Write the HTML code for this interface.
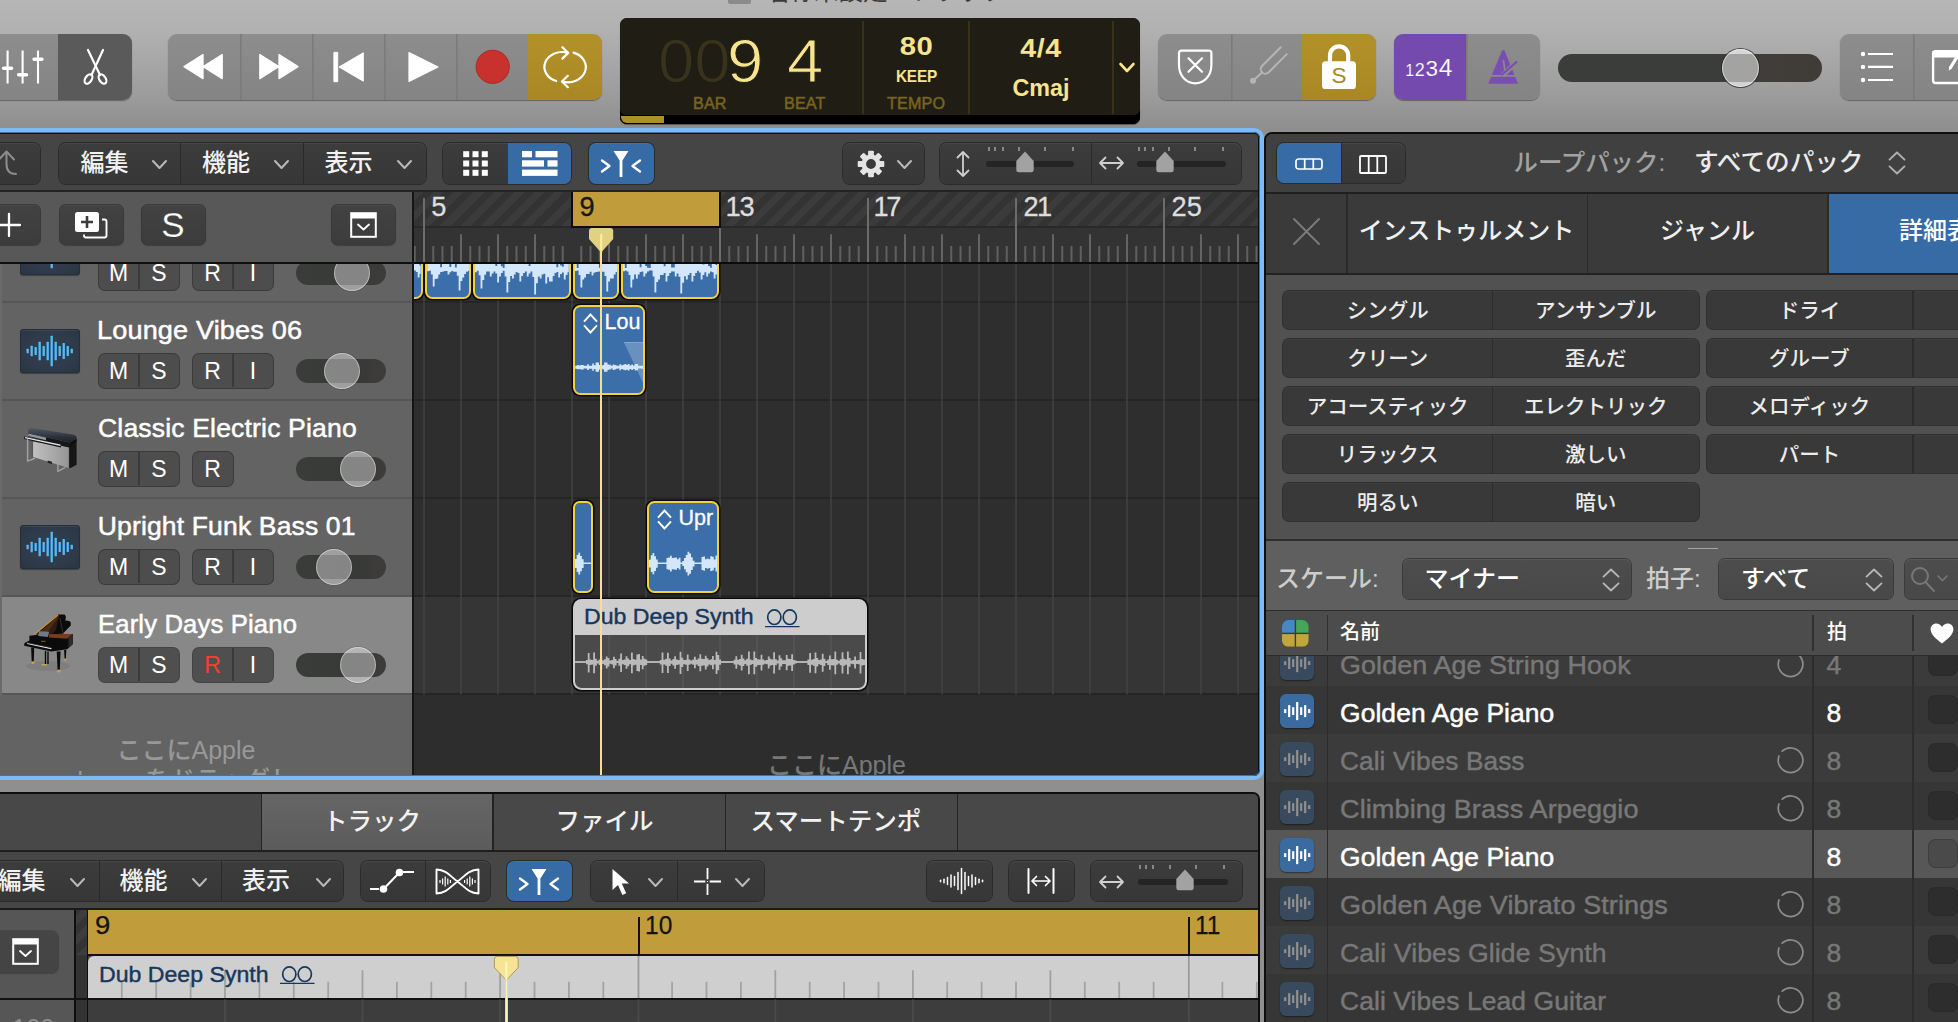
<!DOCTYPE html><html lang="ja"><head><meta charset="utf-8"><title>Logic Pro</title><style>

*{box-sizing:border-box;margin:0;padding:0}
html,body{width:1958px;height:1022px;overflow:hidden;background:#8f8f8f}
body{font-family:"Liberation Sans","Noto Sans CJK JP",sans-serif;color:#fff;position:relative}
.abs{position:absolute}
#top{position:absolute;left:0;top:0;width:1958px;height:130px;background:linear-gradient(#b6b6b6 0px,#b1b1b1 30px,#a6a6a6 65px,#9a9a9a 100px,#8e8e8e 130px)}
.tg{position:absolute;top:34px;height:66px;border-radius:9px;overflow:hidden;box-shadow:0 1px 1px rgba(0,0,0,.35);background:linear-gradient(#8d8d8d,#848484)}
.tb{position:absolute;top:0;height:66px;box-shadow:inset 1.6px 0 0 #7b7b7b}
.tb:first-child{box-shadow:none}
.tb svg{position:absolute;left:0;top:0}
#lcd{position:absolute;left:620px;top:18px;width:520px;height:105.6px;border-radius:7px;background:#000;overflow:hidden;box-shadow:0 1px 1px rgba(0,0,0,.4)}
#lcd .pn{position:absolute;left:0;top:0;width:520px;height:96.8px;border-radius:7px 7px 6px 6px;background:#1f1d14}
#lcd .dv{position:absolute;top:2.5px;width:1.8px;height:93px;background:#3a3218}
#lcd .lab{position:absolute;font-size:16.1px;color:#78631f;letter-spacing:.2px;top:76.5px;line-height:1;height:17px;-webkit-text-stroke:.55px #78631f}
#lcd .big{position:absolute;font-size:61px;line-height:1;top:13px;color:#f8e38e;-webkit-text-stroke:1.05px #1f1d14;transform:scaleX(1.07);transform-origin:0 0}
#lcd .b2{position:absolute;font-weight:bold;color:#f8e38e;line-height:1;text-align:center}
.pb{position:absolute;left:0;top:97.8px;width:520px;height:8px;background:#000}
.pb i{position:absolute;left:1px;top:0;width:43.2px;height:7.2px;background:#b08f28;border-radius:0 0 0 6px}

/* dark UI buttons */
.dg{position:absolute;border-radius:7px;background:linear-gradient(#3c3c3c,#373737);box-shadow:0 0 0 1px #2b2b2b,inset 0 1px 0 rgba(255,255,255,.06);overflow:hidden}
.dg .d{position:absolute;top:0;bottom:0;width:1px;background:#2a2a2a}
.dg .bl{position:absolute;top:0;bottom:0;background:#366ba5}
.jt{position:absolute;font-size:24px;line-height:1;color:#f2f2f2;white-space:nowrap;font-weight:500}
svg{display:block;overflow:visible}


#arr{position:absolute;left:-10px;top:128px;width:1274px;height:652px;border:4px solid #7cbaf8;border-radius:10px;background:#0c0c0c;overflow:hidden}
#arr>.in{position:absolute;left:6px;top:-132px;width:0;height:0}
.chev{position:absolute}
.hb{position:absolute;top:204.3px;height:41.2px;border-radius:7px;background:linear-gradient(#424242,#3c3c3c);box-shadow:inset 0 0 0 1px #3a3a3a,inset 0 2px 0 rgba(255,255,255,.05),0 1px 1px rgba(0,0,0,.3)}
.trk{position:absolute;left:0;width:412px;height:96px;background:#636363}
.trk.sel{background:#888}
.trk .nm{position:absolute;left:98px;top:11.3px;font-size:26.5px;line-height:32px;white-space:nowrap;color:#fff;letter-spacing:.15px;-webkit-text-stroke:.5px #fff;transform-origin:0 0}
.bt2{position:absolute;top:51px;height:33.6px;border-radius:6px;background:#4d4d4d;box-shadow:0 0 0 1px #3b3b3b;overflow:hidden}
.trk.sel .bt2{background:#4f4f4f;box-shadow:0 0 0 1px #444}
.bt2 b{position:absolute;top:0;height:33px;font-weight:normal;font-size:23px;line-height:34px;text-align:center;color:#fff}
.bt2 i{position:absolute;top:0;width:1.5px;height:33px;background:#3a3a3a}
.vs{position:absolute;left:296px;top:56px;width:90px;height:24px;border-radius:12px;background:linear-gradient(90deg,#3a3c3a,#383a38 70%,#3e3c3a)}
.vk{position:absolute;top:50px;width:36px;height:36px;border-radius:50%;background:rgba(255,255,255,.385);border:1.3px solid rgba(255,255,255,.42);box-shadow:0 0 0 .6px rgba(40,40,40,.35)}
.tic{position:absolute;left:20.4px;top:26px;width:59.5px;height:44px;border-radius:3.5px;background:radial-gradient(ellipse at center,#323f50 0%,#2f3b4b 60%,#2a3441 100%);box-shadow:inset 0 0 0 1px #252e3a,inset 0 2px 0 rgba(255,255,255,.07),0 1px 1px rgba(0,0,0,.35)}
.rg{position:absolute;border:2px solid #f6d038;border-radius:7.5px;background:#3c6ea9;box-shadow:0 0 0 1.6px #0a0a0a;overflow:hidden}
.rg .t{position:absolute;font-size:21.5px;line-height:1;color:#fff;white-space:nowrap;-webkit-text-stroke:.3px #fff}


#ed{position:absolute;left:-10px;top:792px;width:1270px;height:240px;border:2px solid #0e0e0e;border-radius:7px;background:#464646;overflow:hidden}
#ed>.in{position:absolute;left:8px;top:-794px;width:0;height:0}
.tab{position:absolute;top:795px;height:56.5px;font-size:24.5px;line-height:54px;text-align:center;color:#f2f2f2;white-space:nowrap;font-weight:500}


#lb{position:absolute;left:1264px;top:132px;width:720px;height:920px;border:2px solid #0e0e0e;border-radius:8px;background:#3a3a3a;overflow:hidden}
#lb>.in{position:absolute;left:-1266px;top:-134px;width:0;height:0}
.tag{position:absolute;height:38.4px;border-radius:6px;background:#393939;box-shadow:0 0 0 1px #303030,inset 0 1px 0 rgba(255,255,255,.04);overflow:hidden}
.tag b{position:absolute;top:0;height:38.4px;font-weight:500;font-size:20.5px;line-height:39.2px;text-align:center;color:#ececec;white-space:nowrap}
.tag i{position:absolute;top:0;width:1.3px;height:38.4px;background:#2c2c2c}
.sel2{position:absolute;top:559px;height:40px;border-radius:6px;background:linear-gradient(#4d4d4d,#484848);box-shadow:0 0 0 1px #3b3b3b,inset 0 1px 0 rgba(255,255,255,.07)}
.lt{position:absolute;font-weight:500;font-size:24px;line-height:28px;white-space:nowrap}
.row{position:absolute;left:1266px;width:700px;height:48px}
.row .n{position:absolute;left:74.3px;top:11px;font-size:26.5px;line-height:32px;white-space:nowrap;letter-spacing:.1px;transform-origin:0 0}
.row .bt{position:absolute;left:560.5px;top:11px;font-size:26.5px;line-height:32px}
.row .ic{position:absolute;left:13.9px;top:7.8px;width:34.2px;height:34.2px;border-radius:6px}
.row .cb{position:absolute;left:663px;top:10px;width:28px;height:26.5px;border-radius:6.5px;background:#2d2d2d;box-shadow:0 0 0 1px #2a2a2a}

</style></head><body>
<div id="top">
<div class="abs" style="left:728px;top:-9px;width:23px;height:13px;background:#8b8b8b;border-radius:2px"></div>
<div class="abs" style="left:765px;top:-20.3px;font-size:24.5px;line-height:1;color:#3c3c3c;white-space:nowrap;height:27px;overflow:hidden">名称未設定 - トラック</div>
<div class="tg" style="left:-10px;width:142px">
<div class="tb" style="left:0;width:68px"><svg width="68" height="67" viewBox="0 0 68 67"><g stroke="#fff" stroke-width="2.1" stroke-linecap="butt"><path d="M17.6 16.6V49.6M32.6 16.6V49.6M48 16.6V49.6"/></g><g stroke="#fff" stroke-width="3.4" stroke-linecap="round"><path d="M13.6 34.3H21.6M28.6 40.7H36.6M44 25.3H52"/></g></svg></div>
<div class="tb" style="left:68px;width:74px;background:#5a5a5a;box-shadow:none"><svg width="74" height="67" viewBox="0 0 74 67"><g fill="none" stroke="#fff" stroke-width="2.2" stroke-linecap="round" stroke-linejoin="round"><path d="M30 16L42 41"/><path d="M45 16L33.5 41"/><ellipse cx="30.5" cy="45" rx="3.2" ry="5.2" transform="rotate(32 30.5 45)"/><ellipse cx="44.5" cy="45" rx="3.2" ry="5.2" transform="rotate(-32 44.5 45)"/></g></svg></div>
</div>
<div class="tg" style="left:168px;width:434px">
<div class="tb" style="left:0px;width:72px;"><svg width="72" height="67" viewBox="0 0 72 67"><path fill="#fff" d="M16 32.6L35 20.6V44.6ZM35.2 32.6L54.2 20.6V44.6Z" stroke="#fff" stroke-width="1.3" stroke-linejoin="round"/></svg></div>
<div class="tb" style="left:72px;width:72px;"><svg width="72" height="67" viewBox="0 0 72 67"><path fill="#fff" d="M58 32.6L39 20.6V44.6ZM38.8 32.6L19.8 20.6V44.6Z" stroke="#fff" stroke-width="1.3" stroke-linejoin="round"/></svg></div>
<div class="tb" style="left:144px;width:72px;"><svg width="72" height="67" viewBox="0 0 72 67"><path fill="#fff" d="M21.9 18.3H25.7V47.7H21.9ZM27 33L51.3 18.8V47.2Z" stroke="#fff" stroke-width="1" stroke-linejoin="round"/></svg></div>
<div class="tb" style="left:216px;width:72px;"><svg width="72" height="67" viewBox="0 0 72 67"><path fill="#fff" d="M25 18.5L54 33L25 47.5Z" stroke="#fff" stroke-width="1.2" stroke-linejoin="round"/></svg></div>
<div class="tb" style="left:288px;width:72px;"><svg width="72" height="67" viewBox="0 0 72 67"><circle cx="36.7" cy="32.8" r="16.6" fill="#c9312e" stroke="#b02825" stroke-width="1"/></svg></div>
<div class="tb" style="left:360px;width:74px;background:linear-gradient(#b3912a,#a98824);box-shadow:none;"><svg width="74" height="67" viewBox="0 0 74 67"><g fill="none" stroke="#fff" stroke-width="2.2" stroke-linecap="round" stroke-linejoin="round"><path d="M28.2 47A17.3 14.6 0 0 1 40 18.9"/><path d="M45.5 18.6A17.3 14.6 0 0 1 34.1 47.5"/><path d="M34.4 13.2L40.2 18.9L34.4 24.6"/><path d="M39.8 41.8L34 47.5L39.8 53.2"/></g></svg></div>
</div>
<div id="lcd"><div class="pn"></div>
<div class="dv" style="left:242px"></div><div class="dv" style="left:348px"></div><div class="dv" style="left:492px"></div>
<div class="big" style="left:38px;color:#39321c">00</div>
<div class="big" style="left:107px">9</div>
<div class="big" style="left:167px">4</div>
<div class="lab" style="left:73px">BAR</div><div class="lab" style="left:164px">BEAT</div><div class="lab" style="left:267px">TEMPO</div>
<div class="b2" style="left:245px;width:103px;top:16px;font-size:25px;letter-spacing:.5px;transform:scaleX(1.17)">80</div>
<div class="b2" style="left:245px;width:103px;top:50px;font-size:16.5px;letter-spacing:-.2px;transform:scaleX(.93)">KEEP</div>
<div class="b2" style="left:350px;width:142px;top:17.5px;font-size:25px;letter-spacing:.5px;transform:scaleX(1.14)">4/4</div>
<div class="b2" style="left:350px;width:142px;top:57.5px;font-size:24.3px;transform:scaleX(.96)">Cmaj</div>
<svg class="abs" style="left:499px;top:44px" width="16" height="12"><path d="M1.5 2L8 9L14.5 2" fill="none" stroke="#f8e38e" stroke-width="2.6" stroke-linecap="round" stroke-linejoin="round"/></svg>
<div class="pb"><i></i></div>
</div>
<div class="tg" style="left:1158px;width:218px">
<div class="tb" style="left:0;width:73px"><svg width="73" height="67" viewBox="0 0 73 67"><g fill="none" stroke="#fff" stroke-width="2.2" stroke-linecap="round" stroke-linejoin="round"><path d="M23.5 16.6H51Q53.4 16.6 53.4 19V31C53.4 42 46 49.3 37.2 49.3C28.4 49.3 21 42 21 31V19Q21 16.6 23.5 16.6Z"/><path d="M30.5 24.3L44 37.8M44 24.3L30.5 37.8"/></g></svg></div>
<div class="tb" style="left:73px;width:71px"><svg width="71" height="67" viewBox="0 0 71 67"><g fill="none" stroke="#b4b4b4" stroke-width="2" stroke-linecap="round"><path d="M49.7 13.3L31 32A4.6 4.6 0 0 0 37.5 38.5L55.8 20.1"/><path d="M31 38.5L22 46.8"/></g><circle cx="22" cy="46.8" r="3" fill="#b4b4b4"/></svg></div>
<div class="tb" style="left:144px;width:74px;background:linear-gradient(#b3912a,#a98824);box-shadow:none"><svg width="74" height="67" viewBox="0 0 74 67"><path d="M28 29V21.4A9.1 9.1 0 0 1 46.2 21.4V29" fill="none" stroke="#fff" stroke-width="4.2"/><rect x="20" y="27.2" width="34" height="27.8" rx="3.6" fill="#fff"/><text x="37.1" y="48.6" font-family="Liberation Sans,sans-serif" font-size="22.5" fill="#a98723" text-anchor="middle">S</text></svg></div>
</div>
<div class="tg" style="left:1394px;width:146px">
<div class="tb" style="left:0;width:72px;background:#754aae"><div class="abs" style="left:11.3px;top:18.6px;white-space:nowrap;line-height:30px;color:#fff;-webkit-text-stroke:.15px #754aae"><span style="font-size:16px;letter-spacing:.6px">1</span><span style="font-size:18px;letter-spacing:.8px">2</span><span style="font-size:22.5px;letter-spacing:.6px">3</span><span style="font-size:24.5px">4</span></div></div>
<div class="tb" style="left:72px;width:74px;"><svg width="74" height="67" viewBox="0 0 74 67"><path d="M36.2 16.3L22.2 49.7H52L38.4 16.3Z" fill="#7a4db3"/><path d="M25 41.9H50" stroke="#8a8a8a" stroke-width="1.9" fill="none"/><path d="M37.3 26L39.2 38" stroke="#8a8a8a" stroke-width="1.6" fill="none"/><path d="M36.5 41.5L50 28.5" stroke="#8a8a8a" stroke-width="5" fill="none"/><path d="M35.5 41L51 27.5" stroke="#7a4db3" stroke-width="2.2" fill="none"/></svg></div>
</div>
<div class="abs" style="left:1558px;top:54px;width:264px;height:28px;border-radius:14px;background:linear-gradient(90deg,#3a3d3a 0%,#3b3d3a 65%,#403d3a 80%,#3f3b37 100%)"></div>
<div class="abs" style="left:1721.6px;top:48.6px;width:37px;height:38.2px;border-radius:50%;background:rgba(255,255,255,.53);border:1.3px solid rgba(255,255,255,.55);box-shadow:0 0 0 1px rgba(40,40,40,.75)"></div>
<div class="tg" style="left:1840px;width:140px">
<div class="tb" style="left:0;width:73px"><svg width="73" height="67" viewBox="0 0 73 67"><g stroke="#fff" stroke-width="2.2" stroke-linecap="butt"><path d="M28 20H53M28 32.9H53M28 46H53"/></g><circle cx="23" cy="20" r="2.2" fill="#fff"/><circle cx="23" cy="32.9" r="2.2" fill="#fff"/><circle cx="23" cy="46" r="2.2" fill="#fff"/></svg></div>
<div class="tb" style="left:73px;width:67px"><svg width="67" height="67" viewBox="0 0 67 67"><g fill="none" stroke="#fff" stroke-width="2.4" stroke-linejoin="round"><path d="M50 17.2H22.6C21 17.2 20.1 18.2 20.1 19.7V46.5C20.1 48 21 49 22.6 49H50"/></g><path d="M19.5 17H50V23.5H19.5Z" fill="#fff"/><path d="M37 34.5L46 19.5" stroke="#fff" stroke-width="3.2"/><path d="M35.6 36.8L36.4 33.2L38.8 34.6Z" fill="#fff"/></svg></div>
</div>
</div>
<div id="arr"><div class="abs" style="left:0;top:0;right:0;bottom:0;border-radius:6px;box-shadow:inset 0 0 0 1px #4a7199;z-index:5;pointer-events:none"></div><div class="in">
<div class="abs" style="left:-6px;top:134px;width:1263.6px;height:57px;background:#454545;border-radius:0 4px 0 0"></div>
<div class="abs" style="left:-6px;top:190.4px;width:1263.6px;height:1.6px;background:#232323"></div>
<div class="dg" style="left:-12px;top:142.5px;width:52.2px;height:41px"><svg class="abs" style="left:8.5px;top:3px" width="30" height="34" viewBox="0 0 30 34"><g fill="none" stroke="#8e8e8e" stroke-width="2" stroke-linecap="round" stroke-linejoin="round"><path d="M2 13.5L9.5 5.5L17 13.5"/><path d="M9.5 6.5V18Q9.5 28 19 28"/></g></svg></div>
<div class="dg" style="left:58.5px;top:142.5px;width:367px;height:41px"><div class="d" style="left:121.5px"></div><div class="d" style="left:244px"></div></div>
<div class="jt" style="left:80.5px;top:150.5px">編集</div>
<svg class="chev" style="left:152px;top:160px" width="15" height="9"><path d="M1 1L7.5 8L14 1" fill="none" stroke="#b9b9b9" stroke-width="2" stroke-linecap="round" stroke-linejoin="round"/></svg>
<div class="jt" style="left:202px;top:150.5px">機能</div>
<svg class="chev" style="left:274px;top:160px" width="15" height="9"><path d="M1 1L7.5 8L14 1" fill="none" stroke="#b9b9b9" stroke-width="2" stroke-linecap="round" stroke-linejoin="round"/></svg>
<div class="jt" style="left:324.5px;top:150.5px">表示</div>
<svg class="chev" style="left:397px;top:160px" width="15" height="9"><path d="M1 1L7.5 8L14 1" fill="none" stroke="#b9b9b9" stroke-width="2" stroke-linecap="round" stroke-linejoin="round"/></svg>
<div class="dg" style="left:442.5px;top:142.5px;width:128.5px;height:41px"><div class="bl" style="left:65px;right:0"></div></div>
<svg class="abs" style="left:462.5px;top:151px" width="25" height="25" viewBox="0 0 25 25"><g fill="#fff"><rect x="0.2" y="0.2" width="6" height="6"/><rect x="9.5" y="0.2" width="6" height="6"/><rect x="18.8" y="0.2" width="6" height="6"/><rect x="0.2" y="9.5" width="6" height="6"/><rect x="9.5" y="9.5" width="6" height="6"/><rect x="18.8" y="9.5" width="6" height="6"/><rect x="0.2" y="18.8" width="6" height="6"/><rect x="9.5" y="18.8" width="6" height="6"/><rect x="18.8" y="18.8" width="6" height="6"/></g></svg>
<svg class="abs" style="left:521.5px;top:151px" width="36" height="25" viewBox="0 0 36 25"><g fill="#fff"><rect x="0" y="0" width="10" height="6.3"/><rect x="13.5" y="0" width="22" height="6.3"/><rect x="0" y="9.3" width="22" height="6.3"/><rect x="25.5" y="9.3" width="10" height="6.3"/><rect x="0" y="18.6" width="35.5" height="6.3"/></g></svg>
<div class="dg" style="left:588.5px;top:142.5px;width:65px;height:41px;background:#366ba5"></div>
<svg class="abs" style="left:599px;top:149.5px" width="44" height="28" viewBox="0 0 44 28"><path d="M14.5 1H29.5L23.4 10.5V27H20.6V10.5Z" fill="#fff"/><g fill="none" stroke="#fff" stroke-width="2.3" stroke-linecap="round" stroke-linejoin="round"><path d="M3 10.5L10.5 16L3 21.5"/><path d="M41 10.5L33.5 16L41 21.5"/></g></svg>
<div class="dg" style="left:842.5px;top:142.5px;width:81px;height:41px"></div>
<svg class="abs" style="left:857px;top:149.5px" width="28" height="28" viewBox="-14 -14 28 28"><g fill="#e4e4e4"><rect x="-2.9" y="-13.3" width="5.8" height="8" rx="1" transform="rotate(0)"/><rect x="-2.9" y="-13.3" width="5.8" height="8" rx="1" transform="rotate(45)"/><rect x="-2.9" y="-13.3" width="5.8" height="8" rx="1" transform="rotate(90)"/><rect x="-2.9" y="-13.3" width="5.8" height="8" rx="1" transform="rotate(135)"/><rect x="-2.9" y="-13.3" width="5.8" height="8" rx="1" transform="rotate(180)"/><rect x="-2.9" y="-13.3" width="5.8" height="8" rx="1" transform="rotate(225)"/><rect x="-2.9" y="-13.3" width="5.8" height="8" rx="1" transform="rotate(270)"/><rect x="-2.9" y="-13.3" width="5.8" height="8" rx="1" transform="rotate(315)"/></g><circle r="7.2" fill="none" stroke="#e4e4e4" stroke-width="4.6"/></svg>
<svg class="chev" style="left:897px;top:160px" width="15" height="9"><path d="M1 1L7.5 8L14 1" fill="none" stroke="#b9b9b9" stroke-width="2" stroke-linecap="round" stroke-linejoin="round"/></svg>
<div class="dg" style="left:940px;top:142.5px;width:300.5px;height:41px"><div class="d" style="left:150.5px"></div></div>
<svg class="abs" style="left:955px;top:149.5px" width="16" height="28" viewBox="0 0 16 28"><g fill="none" stroke="#cfcfcf" stroke-width="1.8" stroke-linecap="round" stroke-linejoin="round"><path d="M8 2V26M2.5 7.5L8 2L13.5 7.5M2.5 20.5L8 26L13.5 20.5"/></g></svg>
<div class="abs" style="left:986px;top:161px;width:88px;height:6px;border-radius:3px;background:#242424"></div><div class="abs" style="left:988px;top:147px;width:2px;height:4px;background:#878787"></div><div class="abs" style="left:994px;top:147px;width:2px;height:4px;background:#878787"></div><div class="abs" style="left:1002px;top:147px;width:2px;height:4px;background:#878787"></div><div class="abs" style="left:1018px;top:147px;width:2px;height:4px;background:#878787"></div><div class="abs" style="left:1044px;top:147px;width:2px;height:4px;background:#878787"></div><div class="abs" style="left:1072px;top:147px;width:2px;height:4px;background:#878787"></div><svg class="abs" style="left:1015px;top:151px" width="20" height="22" viewBox="0 0 20 22"><path d="M10 0.5L18.7 10V19Q18.7 21.3 16.3 21.3H3.7Q1.3 21.3 1.3 19V10Z" fill="#a2a2a2"/></svg>
<svg class="abs" style="left:1097.5px;top:155px" width="27" height="16" viewBox="0 0 27 16"><g fill="none" stroke="#cfcfcf" stroke-width="1.8" stroke-linecap="round" stroke-linejoin="round"><path d="M2 8H25M7.5 2.5L2 8L7.5 13.5M19.5 2.5L25 8L19.5 13.5"/></g></svg>
<div class="abs" style="left:1136.5px;top:161px;width:89.5px;height:6px;border-radius:3px;background:#242424"></div><div class="abs" style="left:1138px;top:147px;width:2px;height:4px;background:#878787"></div><div class="abs" style="left:1144px;top:147px;width:2px;height:4px;background:#878787"></div><div class="abs" style="left:1152px;top:147px;width:2px;height:4px;background:#878787"></div><div class="abs" style="left:1168px;top:147px;width:2px;height:4px;background:#878787"></div><div class="abs" style="left:1194px;top:147px;width:2px;height:4px;background:#878787"></div><div class="abs" style="left:1222px;top:147px;width:2px;height:4px;background:#878787"></div><svg class="abs" style="left:1155px;top:151px" width="20" height="22" viewBox="0 0 20 22"><path d="M10 0.5L18.7 10V19Q18.7 21.3 16.3 21.3H3.7Q1.3 21.3 1.3 19V10Z" fill="#a2a2a2"/></svg>
<div class="abs" style="left:-6px;top:192px;width:418px;height:70px;background:#585858"></div>
<div class="hb" style="left:-12px;width:53.2px"></div>
<svg class="abs" style="left:-3px;top:213px" width="24" height="24"><path d="M12 1V23M0 12H23" stroke="#fff" stroke-width="2.3" fill="none" stroke-linecap="round"/></svg>
<div class="hb" style="left:58.5px;width:65px"></div>
<svg class="abs" style="left:74px;top:211px" width="35" height="29" viewBox="0 0 35 29"><rect x="1" y="1" width="24" height="20" rx="2.5" fill="#fff"/><path d="M13 5V17M7 11H19" stroke="#3c3c3c" stroke-width="2.6" fill="none"/><path d="M28 8.5H30.5Q32.5 8.5 32.5 10.5V24.5Q32.5 26.5 30.5 26.5H12Q10 26.5 10 24.5V23.5" fill="none" stroke="#fff" stroke-width="1.9"/></svg>
<div class="hb" style="left:140.5px;width:65px"></div>
<div class="abs" style="left:140.5px;top:206px;width:65px;text-align:center;font-size:35px;line-height:38px;color:#fff;-webkit-text-stroke:.25px #3c3c3c">S</div>
<div class="hb" style="left:330.5px;width:65px"></div>
<svg class="abs" style="left:349.5px;top:211.5px" width="27" height="26" viewBox="0 0 27 26"><rect x="1.2" y="1.2" width="24.6" height="23.6" fill="none" stroke="#fff" stroke-width="2"/><rect x="1" y="1" width="25" height="5.5" fill="#fff"/><path d="M8 12.5L13.5 17.5L19 12.5" fill="none" stroke="#fff" stroke-width="1.8" stroke-linecap="round" stroke-linejoin="round"/></svg>
<div class="abs" style="left:414px;top:192px;width:843.6px;height:34.5px;background:repeating-linear-gradient(-45deg,#3b3b3b 0 7.15px,#333 7.15px 14.3px)"></div>
<div class="abs" style="left:414px;top:226px;width:843.6px;height:2.2px;background:#292929"></div>
<div class="abs" style="left:414px;top:228.2px;width:843.6px;height:34px;background:#333"></div>
<svg class="abs" style="left:414px;top:192px" width="845" height="71" viewBox="414 192 845 71"><path d="M414.75 246.1V262M433.25 246.1V262M442.50 246.1V262M451.75 246.1V262M470.25 246.1V262M479.50 246.1V262M488.75 246.1V262M507.25 246.1V262M516.50 246.1V262M525.75 246.1V262M544.25 246.1V262M553.50 246.1V262M562.75 246.1V262M581.25 246.1V262M590.50 246.1V262M599.75 246.1V262M618.25 246.1V262M627.50 246.1V262M636.75 246.1V262M655.25 246.1V262M664.50 246.1V262M673.75 246.1V262M692.25 246.1V262M701.50 246.1V262M710.75 246.1V262M729.25 246.1V262M738.50 246.1V262M747.75 246.1V262M766.25 246.1V262M775.50 246.1V262M784.75 246.1V262M803.25 246.1V262M812.50 246.1V262M821.75 246.1V262M840.25 246.1V262M849.50 246.1V262M858.75 246.1V262M877.25 246.1V262M886.50 246.1V262M895.75 246.1V262M914.25 246.1V262M923.50 246.1V262M932.75 246.1V262M951.25 246.1V262M960.50 246.1V262M969.75 246.1V262M988.25 246.1V262M997.50 246.1V262M1006.75 246.1V262M1025.25 246.1V262M1034.50 246.1V262M1043.75 246.1V262M1062.25 246.1V262M1071.50 246.1V262M1080.75 246.1V262M1099.25 246.1V262M1108.50 246.1V262M1117.75 246.1V262M1136.25 246.1V262M1145.50 246.1V262M1154.75 246.1V262M1173.25 246.1V262M1182.50 246.1V262M1191.75 246.1V262M1210.25 246.1V262M1219.50 246.1V262M1228.75 246.1V262M1247.25 246.1V262M1256.50 246.1V262" stroke="#606060" stroke-width="2" fill="none"/><path d="M424.00 234.2V262M461.00 234.2V262M498.00 234.2V262M535.00 234.2V262M609.00 234.2V262M646.00 234.2V262M683.00 234.2V262M720.00 234.2V262M757.00 234.2V262M794.00 234.2V262M831.00 234.2V262M868.00 234.2V262M905.00 234.2V262M942.00 234.2V262M979.00 234.2V262M1016.00 234.2V262M1053.00 234.2V262M1090.00 234.2V262M1127.00 234.2V262M1164.00 234.2V262M1201.00 234.2V262M1238.00 234.2V262" stroke="#646464" stroke-width="2" fill="none"/><path d="M424.00 198V262M720.00 198V262M868.00 198V262M1016.00 198V262M1164.00 198V262" stroke="#6c6c6c" stroke-width="2" fill="none"/></svg>
<div class="abs" style="left:431.2px;top:192px;font-size:27.2px;line-height:30px;color:#dedede;white-space:nowrap;letter-spacing:0px;-webkit-text-stroke:.3px #dedede">5</div>
<div class="abs" style="left:725.4px;top:192px;font-size:27.2px;line-height:30px;color:#dedede;white-space:nowrap;letter-spacing:-1.1px;-webkit-text-stroke:.3px #dedede">13</div>
<div class="abs" style="left:873.6px;top:192px;font-size:27.2px;line-height:30px;color:#dedede;white-space:nowrap;letter-spacing:-2.5px;-webkit-text-stroke:.3px #dedede">17</div>
<div class="abs" style="left:1023.6px;top:192px;font-size:27.2px;line-height:30px;color:#dedede;white-space:nowrap;letter-spacing:-1.6px;-webkit-text-stroke:.3px #dedede">21</div>
<div class="abs" style="left:1171.6px;top:192px;font-size:27.2px;line-height:30px;color:#dedede;white-space:nowrap;letter-spacing:0px;-webkit-text-stroke:.3px #dedede">25</div>
<div class="abs" style="left:571.2px;top:191.9px;width:149.8px;height:35.8px;background:#0d0d0d"></div>
<div class="abs" style="left:572.9px;top:191.9px;width:146.3px;height:34px;background:#c19c3a"></div>
<div class="abs" style="left:579.4px;top:192px;font-size:27.2px;line-height:30px;color:#171717;-webkit-text-stroke:.3px #171717">9</div>
<div class="abs" style="left:414px;top:261.7px;width:843.6px;height:2.3px;background:#0b0b0b"></div>
<div class="abs" style="left:-6px;top:261.7px;width:420px;height:2.1px;background:#0f0f0f"></div>
<div class="abs" style="left:-6px;top:263.5px;width:418px;height:512px;background:#636363;overflow:hidden"><div class="abs" style="left:6px;top:-263.5px">
<div class="trk" style="top:205px">
<div class="tic"><svg width="59.5" height="44" viewBox="0 0 59.5 44"><g fill="#57b9f9"><rect x="6.50" y="19.75" width="2.3" height="4.5" rx=".5"/><rect x="10.51" y="16.85" width="2.3" height="10.3" rx=".5"/><rect x="14.52" y="17.90" width="2.3" height="8.2" rx=".5"/><rect x="18.53" y="12.85" width="2.3" height="18.3" rx=".5"/><rect x="22.54" y="16.95" width="2.3" height="10.1" rx=".5"/><rect x="26.55" y="12.85" width="2.3" height="18.3" rx=".5"/><rect x="30.56" y="6.75" width="2.3" height="30.5" rx=".5"/><rect x="34.57" y="12.85" width="2.3" height="18.3" rx=".5"/><rect x="38.58" y="16.95" width="2.3" height="10.1" rx=".5"/><rect x="42.59" y="13.90" width="2.3" height="16.2" rx=".5"/><rect x="46.60" y="16.95" width="2.3" height="10.1" rx=".5"/><rect x="50.61" y="19.75" width="2.3" height="4.5" rx=".5"/></g></svg></div>
<div class="bt2" style="left:98.5px;width:80px"><b style="left:0;width:40px">M</b><i style="left:39.5px"></i><b style="left:40.5px;width:40px">S</b></div>
<div class="bt2" style="left:192.5px;width:80.5px"><b style="left:0;width:40px">R</b><i style="left:39.5px"></i><b style="left:40.5px;width:40px">I</b></div>
<div class="vs"></div><div class="vk" style="left:334px"></div>
</div>
<div class="abs" style="left:-6px;top:301px;width:418px;height:2px;background:#565656"></div>
<div class="trk" style="top:303px">
<div class="tic"><svg width="59.5" height="44" viewBox="0 0 59.5 44"><g fill="#57b9f9"><rect x="6.50" y="19.75" width="2.3" height="4.5" rx=".5"/><rect x="10.51" y="16.85" width="2.3" height="10.3" rx=".5"/><rect x="14.52" y="17.90" width="2.3" height="8.2" rx=".5"/><rect x="18.53" y="12.85" width="2.3" height="18.3" rx=".5"/><rect x="22.54" y="16.95" width="2.3" height="10.1" rx=".5"/><rect x="26.55" y="12.85" width="2.3" height="18.3" rx=".5"/><rect x="30.56" y="6.75" width="2.3" height="30.5" rx=".5"/><rect x="34.57" y="12.85" width="2.3" height="18.3" rx=".5"/><rect x="38.58" y="16.95" width="2.3" height="10.1" rx=".5"/><rect x="42.59" y="13.90" width="2.3" height="16.2" rx=".5"/><rect x="46.60" y="16.95" width="2.3" height="10.1" rx=".5"/><rect x="50.61" y="19.75" width="2.3" height="4.5" rx=".5"/></g></svg></div>
<div class="nm" style="left:96.6px;transform:scaleX(1.022)">Lounge Vibes 06</div>
<div class="bt2" style="left:98.5px;width:80px"><b style="left:0;width:40px">M</b><i style="left:39.5px"></i><b style="left:40.5px;width:40px">S</b></div>
<div class="bt2" style="left:192.5px;width:80.5px"><b style="left:0;width:40px">R</b><i style="left:39.5px"></i><b style="left:40.5px;width:40px">I</b></div>
<div class="vs"></div><div class="vk" style="left:324px"></div>
</div>
<div class="abs" style="left:-6px;top:399px;width:418px;height:2px;background:#565656"></div>
<div class="trk" style="top:401px">
<svg class="abs" style="left:22px;top:26px" width="56" height="48" viewBox="0 0 56 48"><defs><linearGradient id="epg" x1="0" y1="0" x2="1" y2="0"><stop offset="0" stop-color="#c0c0c0"/><stop offset="1" stop-color="#969696"/></linearGradient><linearGradient id="epl" x1="0" y1="0" x2="0" y2="1"><stop offset="0" stop-color="#4e5866"/><stop offset=".6" stop-color="#2c323b"/><stop offset="1" stop-color="#1d2026"/></linearGradient></defs><path d="M11.1 14.7L46.7 19.8V40.9L11.1 29.9Z" fill="url(#epg)"/><path d="M47.2 17L54.6 12V37.8L48.2 41.2L47.2 40.5Z" fill="#161616"/><path d="M6.2 6L47.5 15.5L47.2 20.5L40 19L6 9.5Z" fill="#15171a"/><path d="M47.5 15.5L54.6 11.5V14L47.2 20.5Z" fill="#0e0e0f"/><path d="M6.4 2.6Q7 1 11.5 1.2L50.6 7.6Q54.6 8.5 54.6 10.5V11.8L47.5 15.6L6.2 6Z" fill="url(#epl)"/><path d="M6.3 6.4L24 10.4V13.2L6.1 9Z" fill="#8d949c"/><path d="M2.1 9.6L38.9 17.4L38.9 20.4L2.1 12Z" fill="#121212"/><path d="M3 9.9L38.5 17.5L38.5 18.9L3 11.2Z" fill="#e6e6e6"/><g fill="none" stroke="#a3a3a3" stroke-width="1.4" stroke-linecap="round" stroke-linejoin="round"><path d="M5.6 12.7V34.2L12.5 31.5"/><path d="M35.9 20.6V44.4L42.8 40.7"/></g><path d="M10.2 14.5V30" stroke="#555" stroke-width="1" fill="none"/><path d="M25.6 33.5L30 34.8V37L25.6 35.8Z" fill="#222"/></svg>
<div class="nm" style="left:97.8px;transform:scaleX(1.003)">Classic Electric Piano</div>
<div class="bt2" style="left:98.5px;width:80px"><b style="left:0;width:40px">M</b><i style="left:39.5px"></i><b style="left:40.5px;width:40px">S</b></div>
<div class="bt2" style="left:192.5px;width:40.5px"><b style="left:0;width:40px">R</b></div>
<div class="vs"></div><div class="vk" style="left:340px"></div>
</div>
<div class="abs" style="left:-6px;top:497px;width:418px;height:2px;background:#565656"></div>
<div class="trk" style="top:499px">
<div class="tic"><svg width="59.5" height="44" viewBox="0 0 59.5 44"><g fill="#57b9f9"><rect x="6.50" y="19.75" width="2.3" height="4.5" rx=".5"/><rect x="10.51" y="16.85" width="2.3" height="10.3" rx=".5"/><rect x="14.52" y="17.90" width="2.3" height="8.2" rx=".5"/><rect x="18.53" y="12.85" width="2.3" height="18.3" rx=".5"/><rect x="22.54" y="16.95" width="2.3" height="10.1" rx=".5"/><rect x="26.55" y="12.85" width="2.3" height="18.3" rx=".5"/><rect x="30.56" y="6.75" width="2.3" height="30.5" rx=".5"/><rect x="34.57" y="12.85" width="2.3" height="18.3" rx=".5"/><rect x="38.58" y="16.95" width="2.3" height="10.1" rx=".5"/><rect x="42.59" y="13.90" width="2.3" height="16.2" rx=".5"/><rect x="46.60" y="16.95" width="2.3" height="10.1" rx=".5"/><rect x="50.61" y="19.75" width="2.3" height="4.5" rx=".5"/></g></svg></div>
<div class="nm" style="left:97.8px;transform:scaleX(1.0)">Upright Funk Bass 01</div>
<div class="bt2" style="left:98.5px;width:80px"><b style="left:0;width:40px">M</b><i style="left:39.5px"></i><b style="left:40.5px;width:40px">S</b></div>
<div class="bt2" style="left:192.5px;width:80.5px"><b style="left:0;width:40px">R</b><i style="left:39.5px"></i><b style="left:40.5px;width:40px">I</b></div>
<div class="vs"></div><div class="vk" style="left:315.5px"></div>
</div>
<div class="abs" style="left:-6px;top:595px;width:418px;height:2px;background:#565656"></div>
<div class="trk sel" style="top:597px">
<svg class="abs" style="left:22px;top:15px" width="54" height="62" viewBox="0 0 54 62"><ellipse cx="26" cy="54" rx="22" ry="5" fill="#000" opacity=".07"/><path d="M13.5 22.5L36 2.5H42.6L44 4.5L41 21.5L27 22.5Z" fill="#0d0d0d"/><path d="M15.5 22.3L36.6 3.6L41.5 5L38 14L30 22.3Z" fill="#2f1b0f"/><path d="M15.5 22.3L36.6 3.6L37.5 4L24 22.3Z" fill="#4f2a14"/><path d="M37 4L42.5 5L41 12L38.5 21.5L33 22Z" fill="#0b0b0b"/><path d="M41.5 8.5Q48 8 48.7 10.5V13.5L40.8 21.7L38.5 21.5Z" fill="#0a0a0a"/><path d="M12.6 22.3L36 3.1" stroke="#c49338" stroke-width="1.3" fill="none"/><path d="M38 6L41 21.5" stroke="#3a3a3a" stroke-width=".8" fill="none"/><path d="M7.4 23.7L16.2 22.8L50.9 21.9V32L45.2 37.3L29.4 39.5L2.1 33.8L2.5 31.1L7.4 28.5Z" fill="#0b0b0b"/><path d="M27.2 22.3L50.5 21.9L45.2 26.7L26.7 25.4Z" fill="#7a3c1b"/><path d="M46.5 25.5L50.9 22V32L46.5 36Z" fill="#2b2b2b"/><path d="M17 19.2L27.2 19.7L25.9 25L16.2 24.1Z" fill="#6c7a8c"/><path d="M5.2 31.4L29.4 36.7" stroke="#e4e4e4" stroke-width="1.3" fill="none"/><path d="M4 30.5L29.6 35.6" stroke="#2a2a2a" stroke-width=".8" fill="none"/><path d="M19 29.3H23.5" stroke="#b08a3a" stroke-width=".7" fill="none"/><g fill="#0b0b0b"><path d="M9.1 35.5H12.2L11.8 49.5H9.7Z"/><path d="M22.8 39H24.2V52H22.8ZM25.3 39.5H26.7V52H25.3Z"/><path d="M34.7 39.5H38.6L37.8 58H35.6Z"/><path d="M42.1 38H44.3L43.9 47H42.6Z"/></g><g fill="#c9a24a"><ellipse cx="11" cy="50.7" rx="1.6" ry="1.3"/><rect x="19.5" y="52" width="5.5" height="1.4" rx=".5"/><ellipse cx="36.9" cy="59" rx="1.8" ry="1.5"/><ellipse cx="43.3" cy="47.6" rx="1.3" ry="1.1"/></g></svg>
<div class="nm" style="left:98.3px;transform:scaleX(0.968)">Early Days Piano</div>
<div class="bt2" style="left:98.5px;width:80px"><b style="left:0;width:40px">M</b><i style="left:39.5px"></i><b style="left:40.5px;width:40px">S</b></div>
<div class="bt2" style="left:192.5px;width:80.5px"><b style="left:0;width:40px;color:#ff3b30">R</b><i style="left:39.5px"></i><b style="left:40.5px;width:40px">I</b></div>
<div class="vs"></div><div class="vk" style="left:340px"></div>
</div>
<div class="abs" style="left:-6px;top:693px;width:418px;height:2px;background:#565656"></div>
<div class="abs" style="left:-6px;top:263px;width:7.9px;height:432px;background:#6a6a6a"></div>
<div class="abs" style="left:0;top:735px;width:372px;text-align:center;font-size:25px;font-weight:500;line-height:30px;color:#989898;white-space:nowrap">ここにApple<br>Loopsをドラッグし</div>
</div></div>
<div class="abs" style="left:412px;top:192px;width:2.3px;height:584px;background:#161616"></div>
<div class="abs" style="left:414.3px;top:263.5px;width:843.3px;height:512px;background:#2d2d2d;overflow:hidden"><div class="abs" style="left:-414.3px;top:-263.5px">
<div class="abs" style="left:414px;top:205px;width:845px;height:96px;background:#2e2e2e"></div>
<div class="abs" style="left:414px;top:301px;width:845px;height:2px;background:#252525"></div>
<div class="abs" style="left:414px;top:303px;width:845px;height:96px;background:#2e2e2e"></div>
<div class="abs" style="left:414px;top:399px;width:845px;height:2px;background:#252525"></div>
<div class="abs" style="left:414px;top:401px;width:845px;height:96px;background:#2e2e2e"></div>
<div class="abs" style="left:414px;top:497px;width:845px;height:2px;background:#252525"></div>
<div class="abs" style="left:414px;top:499px;width:845px;height:96px;background:#2e2e2e"></div>
<div class="abs" style="left:414px;top:595px;width:845px;height:2px;background:#252525"></div>
<div class="abs" style="left:414px;top:597px;width:845px;height:96px;background:#353535"></div>
<div class="abs" style="left:414px;top:693px;width:845px;height:2px;background:#252525"></div>
<svg class="abs" style="left:414px;top:263px" width="845" height="432" viewBox="414 263 845 432"><path d="M424.00 263V694.5M461.00 263V694.5M498.00 263V694.5M535.00 263V694.5M572.00 263V694.5M609.00 263V694.5M646.00 263V694.5M683.00 263V694.5M720.00 263V694.5M757.00 263V694.5M794.00 263V694.5M831.00 263V694.5M868.00 263V694.5M905.00 263V694.5M942.00 263V694.5M979.00 263V694.5M1016.00 263V694.5M1053.00 263V694.5M1090.00 263V694.5M1127.00 263V694.5M1164.00 263V694.5M1201.00 263V694.5M1238.00 263V694.5" stroke="#464646" stroke-width="1.3" fill="none"/></svg>
<div class="rg" style="left:400px;top:230px;width:22.7px;height:68.8px"></div>
<svg class="abs" style="left:0;top:0" width="10" height="10"><path d="M414.00 263.5H415.85V270.6H414.00ZM415.85 263.5H417.70V271.9H415.85ZM417.70 263.5H419.55V277.5H417.70ZM419.55 265.5H420.70V273.9H419.55Z" fill="#d3e6fa"/></svg>
<div class="rg" style="left:425.2px;top:230px;width:46.1px;height:68.8px"></div>
<svg class="abs" style="left:0;top:0" width="10" height="10"><path d="M427.20 263.5H429.05V271.3H427.20ZM429.05 263.5H430.90V270.8H429.05ZM430.90 263.5H432.75V274.6H430.90ZM432.75 263.5H434.60V286.5H432.75ZM434.60 263.5H436.45V278.9H434.60ZM436.45 263.5H438.30V278.5H436.45ZM438.30 263.5H440.15V274.4H438.30ZM440.15 267.2H442.00V272.0H440.15ZM442.00 263.5H443.85V271.7H442.00ZM443.85 263.5H445.70V271.0H443.85ZM445.70 263.5H447.55V271.0H445.70ZM447.55 263.5H449.40V274.5H447.55ZM449.40 267.0H451.25V272.2H449.40ZM451.25 263.5H453.10V270.9H451.25ZM453.10 263.5H454.95V271.8H453.10ZM454.95 267.5H456.80V271.7H454.95ZM456.80 263.5H458.65V275.8H456.80ZM458.65 263.5H460.50V290.5H458.65ZM460.50 263.5H462.35V281.1H460.50ZM462.35 263.5H464.20V277.5H462.35ZM464.20 263.5H466.05V273.9H464.20ZM466.05 263.5H467.90V271.7H466.05ZM467.90 263.5H469.30V270.8H467.90Z" fill="#d3e6fa"/></svg>
<div class="rg" style="left:473px;top:230px;width:97.8px;height:68.8px"></div>
<svg class="abs" style="left:0;top:0" width="10" height="10"><path d="M475.00 263.5H476.85V272.2H475.00ZM476.85 263.5H478.70V270.7H476.85ZM478.70 263.5H480.55V275.2H478.70ZM480.55 263.5H482.40V288.5H480.55ZM482.40 263.5H484.25V279.9H482.40ZM484.25 263.5H486.10V274.8H484.25ZM486.10 263.5H487.95V271.6H486.10ZM487.95 263.5H489.80V271.6H487.95ZM489.80 263.5H491.65V276.5H489.80ZM491.65 263.5H493.50V273.4H491.65ZM493.50 263.5H495.35V271.5H493.50ZM495.35 266.0H497.20V273.4H495.35ZM497.20 263.5H499.05V282.5H497.20ZM499.05 263.5H500.90V276.6H499.05ZM500.90 266.2H502.75V273.1H500.90ZM502.75 267.9H504.60V270.7H502.75ZM504.60 263.5H506.45V276.4H504.60ZM506.45 263.5H508.30V292.5H506.45ZM508.30 263.5H510.15V282.1H508.30ZM510.15 263.7H512.00V275.9H510.15ZM512.00 263.5H513.85V278.5H512.00ZM513.85 263.5H515.70V274.4H513.85ZM515.70 263.5H517.55V272.0H515.70ZM517.55 263.5H519.40V273.1H517.55ZM519.40 263.5H521.25V281.5H519.40ZM521.25 263.5H523.10V276.1H521.25ZM523.10 263.5H524.95V272.9H523.10ZM524.95 263.5H526.80V271.6H524.95ZM526.80 263.5H528.65V276.5H526.80ZM528.65 266.0H530.50V273.4H528.65ZM530.50 263.5H532.35V271.5H530.50ZM532.35 263.5H534.20V277.0H532.35ZM534.20 263.5H536.05V294.5H534.20ZM536.05 263.5H537.90V283.2H536.05ZM537.90 263.5H539.75V276.5H537.90ZM539.75 263.5H541.60V278.5H539.75ZM541.60 263.5H543.45V274.4H541.60ZM543.45 263.5H545.30V273.7H543.45ZM545.30 263.5H547.15V283.5H545.30ZM547.15 263.5H549.00V277.2H547.15ZM549.00 263.5H550.85V281.5H549.00ZM550.85 263.5H552.70V281.5H550.85ZM552.70 263.5H554.55V276.1H552.70ZM554.55 263.5H556.40V272.9H554.55ZM556.40 267.3H558.25V271.9H556.40ZM558.25 263.5H560.10V277.5H558.25ZM560.10 265.5H561.95V273.9H560.10ZM561.95 266.8H563.80V272.5H561.95ZM563.80 263.5H565.65V279.5H563.80ZM565.65 263.5H567.50V275.0H565.65ZM567.50 263.5H568.80V272.3H567.50Z" fill="#d3e6fa"/></svg>
<div class="rg" style="left:572.9px;top:230px;width:46.2px;height:68.8px"></div>
<svg class="abs" style="left:0;top:0" width="10" height="10"><path d="M574.90 263.5H576.75V271.0H574.90ZM576.75 267.9H578.60V270.6H576.75ZM578.60 263.5H580.45V274.9H578.60ZM580.45 263.5H582.30V287.5H580.45ZM582.30 263.5H584.15V279.4H582.30ZM584.15 263.5H586.00V277.5H584.15ZM586.00 263.5H587.85V273.9H586.00ZM587.85 263.5H589.70V273.9H587.85ZM589.70 263.5H591.55V271.7H589.70ZM591.55 264.1H593.40V275.5H591.55ZM593.40 263.5H595.25V272.8H593.40ZM595.25 263.5H597.10V271.9H595.25ZM597.10 263.5H598.95V271.7H597.10ZM598.95 267.7H600.80V271.4H598.95ZM600.80 263.5H602.65V271.7H600.80ZM602.65 263.5H604.50V271.7H602.65ZM604.50 263.5H606.35V276.1H604.50ZM606.35 263.5H608.20V291.5H606.35ZM608.20 263.5H610.05V281.6H608.20ZM610.05 263.5H611.90V278.5H610.05ZM611.90 263.5H613.75V278.5H611.90ZM613.75 263.5H615.60V274.4H613.75ZM615.60 263.5H617.10V272.0H615.60Z" fill="#d3e6fa"/></svg>
<div class="rg" style="left:621px;top:230px;width:98.2px;height:68.8px"></div>
<svg class="abs" style="left:0;top:0" width="10" height="10"><path d="M623.00 263.5H624.85V271.3H623.00ZM624.85 267.9H626.70V270.6H624.85ZM626.70 263.5H628.55V271.5H626.70ZM628.55 263.5H630.40V274.9H628.55ZM630.40 263.5H632.25V287.5H630.40ZM632.25 263.5H634.10V279.4H632.25ZM634.10 263.5H635.95V274.5H634.10ZM635.95 263.5H637.80V278.5H635.95ZM637.80 263.5H639.65V274.4H637.80ZM639.65 267.2H641.50V272.0H639.65ZM641.50 263.5H643.35V271.6H641.50ZM643.35 263.5H645.20V276.5H643.35ZM645.20 266.0H647.05V273.4H645.20ZM647.05 267.7H648.90V271.5H647.05ZM648.90 267.9H650.75V270.6H648.90ZM650.75 263.5H652.60V270.6H650.75ZM652.60 263.5H654.45V276.4H652.60ZM654.45 263.5H656.30V292.5H654.45ZM656.30 263.5H658.15V282.1H656.30ZM658.15 263.5H660.00V279.5H658.15ZM660.00 263.5H661.85V275.0H660.00ZM661.85 263.5H663.70V275.0H661.85ZM663.70 266.3H665.55V273.1H663.70ZM665.55 263.5H667.40V281.5H665.55ZM667.40 263.5H669.25V276.1H667.40ZM669.25 263.5H671.10V272.9H669.25ZM671.10 267.6H672.95V271.6H671.10ZM672.95 267.6H674.80V271.6H672.95ZM674.80 263.5H676.65V276.5H674.80ZM676.65 263.5H678.50V273.4H676.65ZM678.50 263.5H680.35V276.7H678.50ZM680.35 263.5H682.20V293.5H680.35ZM682.20 263.5H684.05V282.7H682.20ZM684.05 263.5H685.90V276.2H684.05ZM685.90 263.5H687.75V279.5H685.90ZM687.75 263.5H689.60V275.0H687.75ZM689.60 263.5H691.45V273.1H689.60ZM691.45 263.5H693.30V281.5H691.45ZM693.30 263.6H695.15V276.1H693.30ZM695.15 263.5H697.00V272.9H695.15ZM697.00 263.5H698.85V270.7H697.00ZM698.85 263.5H700.70V272.5H698.85ZM700.70 263.5H702.55V279.5H700.70ZM702.55 264.6H704.40V275.0H702.55ZM704.40 263.5H706.25V272.3H704.40ZM706.25 263.5H708.10V276.5H706.25ZM708.10 266.0H709.95V273.4H708.10ZM709.95 267.7H711.80V271.5H709.95ZM711.80 263.5H713.65V272.2H711.80ZM713.65 263.5H715.50V278.5H713.65ZM715.50 265.0H717.20V274.4H715.50Z" fill="#d3e6fa"/></svg>
<div class="rg" style="left:573.2px;top:305.1px;width:71.8px;height:90.4px"><svg class="abs" style="left:-2px;top:-2px" width="72" height="90" viewBox="0 0 72 90"><path d="M51 37.5H72V82Z" fill="#a9c0df" opacity=".42"/><path d="M51 37.5H72" stroke="#b5c9e4" stroke-width="1" opacity=".5"/></svg><svg class="abs" style="left:7.6px;top:6.2px" width="15" height="21" viewBox="0 0 15 21"><g fill="none" stroke="#fff" stroke-width="1.9" stroke-linejoin="miter"><path d="M1 8.6L7.5 1.5L14 8.6M1 12.4L7.5 19.5L14 12.4"/></g></svg><div class="t" style="left:29.3px;top:5.3px">Lou</div></div>
<svg class="abs" style="left:0;top:0" width="10" height="10"><path d="M575.20 365.7H576.90V368.7H575.20ZM576.90 365.1H578.60V369.3H576.90ZM578.60 365.5H580.30V368.9H578.60ZM580.30 365.0H582.00V369.4H580.30ZM582.00 364.9H583.70V369.5H582.00ZM583.70 365.8H585.40V368.6H583.70ZM585.40 365.8H587.10V368.6H585.40ZM587.10 364.3H588.80V370.1H587.10ZM588.80 365.7H590.50V368.7H588.80ZM590.50 365.7H592.20V368.7H590.50ZM592.20 363.6H593.90V370.8H592.20ZM593.90 365.3H595.60V369.1H593.90ZM595.60 362.6H597.30V371.8H595.60ZM597.30 362.6H599.00V371.8H597.30ZM599.00 364.9H600.70V369.5H599.00ZM600.70 365.8H602.40V368.6H600.70ZM602.40 364.9H604.10V369.5H602.40ZM604.10 362.6H605.80V371.8H604.10ZM605.80 362.6H607.50V371.8H605.80ZM607.50 364.6H609.20V369.8H607.50ZM609.20 364.8H610.90V369.6H609.20ZM610.90 365.8H612.60V368.6H610.90ZM612.60 364.5H614.30V369.9H612.60ZM614.30 365.0H616.00V369.4H614.30ZM616.00 365.6H617.70V368.8H616.00ZM617.70 365.8H619.40V368.6H617.70ZM619.40 364.2H621.10V370.2H619.40ZM621.10 365.3H622.80V369.1H621.10ZM622.80 364.7H624.50V369.7H622.80ZM624.50 364.1H626.20V370.3H624.50ZM626.20 364.7H627.90V369.7H626.20ZM627.90 363.9H629.60V370.5H627.90ZM629.60 365.5H631.30V368.9H629.60ZM631.30 364.4H633.00V370.0H631.30ZM633.00 365.4H634.70V369.0H633.00ZM634.70 363.9H636.40V370.5H634.70ZM636.40 364.1H638.10V370.3H636.40ZM638.10 365.8H639.80V368.6H638.10ZM639.80 365.8H641.50V368.6H639.80ZM641.50 365.7H643.00V368.7H641.50Z" fill="#d3e6fa"/></svg>
<div class="rg" style="left:572.9px;top:500.9px;width:20.3px;height:92.1px;border-radius:6.5px"></div>
<svg class="abs" style="left:0;top:0" width="10" height="10"><path d="M574.90 559.1H576.65V568.1H574.90ZM576.65 555.1H578.40V572.1H576.65ZM578.40 552.7H580.15V574.5H578.40ZM580.15 556.0H581.90V571.2H580.15ZM581.90 559.3H583.65V567.9H581.90ZM583.65 562.4H585.40V564.0H583.65ZM585.40 562.4H587.15V564.0H585.40ZM587.15 562.4H588.90V564.0H587.15ZM588.90 562.4H590.65V564.0H588.90ZM590.65 562.4H591.20V564.0H590.65Z" fill="#d3e6fa"/></svg>
<div class="rg" style="left:647px;top:500.9px;width:72.1px;height:92.1px"><svg class="abs" style="left:8.3px;top:6.5px" width="15" height="21" viewBox="0 0 15 21"><g fill="none" stroke="#fff" stroke-width="1.9" stroke-linejoin="miter"><path d="M1 8.6L7.5 1.5L14 8.6M1 12.4L7.5 19.5L14 12.4"/></g></svg><div class="t" style="left:29.5px;top:5.5px">Upr</div></div>
<svg class="abs" style="left:0;top:0" width="10" height="10"><path d="M649.00 559.8H650.75V567.4H649.00ZM650.75 555.2H652.50V572.0H650.75ZM652.50 552.9H654.25V574.3H652.50ZM654.25 556.2H656.00V571.0H654.25ZM656.00 559.5H657.75V567.7H656.00ZM657.75 562.4H659.50V564.0H657.75ZM659.50 562.4H661.25V564.0H659.50ZM661.25 562.4H663.00V564.0H661.25ZM663.00 562.4H664.75V564.0H663.00ZM664.75 562.4H666.50V564.0H664.75ZM666.50 558.0H668.25V569.2H666.50ZM668.25 557.5H670.00V569.7H668.25ZM670.00 555.8H671.75V571.4H670.00ZM671.75 557.9H673.50V569.3H671.75ZM673.50 557.7H675.25V569.5H673.50ZM675.25 557.4H677.00V569.8H675.25ZM677.00 559.2H678.75V568.0H677.00ZM678.75 557.7H680.50V569.5H678.75ZM680.50 562.4H682.25V564.0H680.50ZM682.25 561.1H684.00V566.1H682.25ZM684.00 558.0H685.75V569.2H684.00ZM685.75 554.9H687.50V572.3H685.75ZM687.50 551.8H689.25V575.4H687.50ZM689.25 553.5H691.00V573.7H689.25ZM691.00 557.2H692.75V570.0H691.00ZM692.75 560.8H694.50V566.4H692.75ZM694.50 562.4H696.25V564.0H694.50ZM696.25 562.4H698.00V564.0H696.25ZM698.00 562.4H699.75V564.0H698.00ZM699.75 562.4H701.50V564.0H699.75ZM701.50 557.1H703.25V570.1H701.50ZM703.25 556.4H705.00V570.8H703.25ZM705.00 559.3H706.75V567.9H705.00ZM706.75 558.4H708.50V568.8H706.75ZM708.50 559.3H710.25V567.9H708.50ZM710.25 556.3H712.00V570.9H710.25ZM712.00 556.8H713.75V570.4H712.00ZM713.75 559.5H715.50V567.7H713.75ZM715.50 555.6H717.10V571.6H715.50Z" fill="#d3e6fa"/></svg>
<div class="abs" style="left:573.2px;top:599.4px;width:294.1px;height:90.6px;border-radius:8.5px;background:#cdcdcd;box-shadow:0 0 0 1.6px #0a0a0a;overflow:hidden"><div class="abs" style="left:2px;top:36px;width:290.1px;height:52.8px;background:#4a4a4a;border-radius:0 0 6.5px 6.5px;overflow:hidden"><div class="abs" style="left:33.2px;top:0;width:1.3px;height:53px;background:#525252"></div><div class="abs" style="left:70.2px;top:0;width:1.3px;height:53px;background:#525252"></div><div class="abs" style="left:107.2px;top:0;width:1.3px;height:53px;background:#525252"></div><div class="abs" style="left:144.2px;top:0;width:1.3px;height:53px;background:#525252"></div><div class="abs" style="left:181.2px;top:0;width:1.3px;height:53px;background:#525252"></div><div class="abs" style="left:218.2px;top:0;width:1.3px;height:53px;background:#525252"></div><div class="abs" style="left:255.2px;top:0;width:1.3px;height:53px;background:#525252"></div></div><div class="abs" style="left:10.5px;top:4.6px;font-size:21.5px;line-height:26px;color:#17375c;white-space:nowrap;transform:scaleX(1.075);transform-origin:0 0;-webkit-text-stroke:.4px #17375c">Dub Deep Synth</div><svg class="abs" style="left:191.5px;top:9.5px" width="35" height="19" viewBox="0 0 35 19"><g fill="none" stroke="#17375c" stroke-width="1.7"><ellipse cx="9.3" cy="8.2" rx="6.6" ry="7.3"/><ellipse cx="24.8" cy="8.2" rx="6.6" ry="7.3"/><path d="M0 17.6H34.5" stroke-width="1.4"/></g></svg></div>
<svg class="abs" style="left:0;top:0" width="10" height="10"><path d="M575.2 662H865.3" stroke="#b9b9b9" stroke-width="1.3"/><path d="M575.20 661.3H577.00V662.7H575.20ZM577.00 661.3H578.80V662.7H577.00ZM578.80 661.3H580.60V662.7H578.80ZM580.60 661.3H582.40V662.7H580.60ZM582.40 661.3H584.20V662.7H582.40ZM584.20 661.3H586.00V662.7H584.20ZM586.00 660.0H587.80V664.3H586.00ZM587.80 653.1H589.60V672.5H587.80ZM589.60 659.5H591.40V665.0H589.60ZM591.40 659.9H593.20V664.4H591.40ZM593.20 652.5H595.00V673.2H593.20ZM595.00 658.8H596.80V665.8H595.00ZM596.80 660.8H598.60V663.4H596.80ZM598.60 659.4H600.40V665.0H598.60ZM600.40 655.6H602.20V669.5H600.40ZM602.20 660.3H604.00V664.0H602.20ZM604.00 659.3H605.80V665.2H604.00ZM605.80 656.5H607.60V668.5H605.80ZM607.60 658.1H609.40V666.6H607.60ZM609.40 660.5H611.20V663.8H609.40ZM611.20 659.9H613.00V664.5H611.20ZM613.00 656.7H614.80V668.3H613.00ZM614.80 659.0H616.60V665.5H614.80ZM616.60 661.1H618.40V663.1H616.60ZM618.40 658.8H620.20V665.8H618.40ZM620.20 653.5H622.00V672.0H620.20ZM622.00 660.1H623.80V664.3H622.00ZM623.80 659.5H625.60V665.0H623.80ZM625.60 656.3H627.40V668.8H625.60ZM627.40 658.4H629.20V666.2H627.40ZM629.20 660.0H631.00V664.3H629.20ZM631.00 652.4H632.80V673.3H631.00ZM632.80 659.0H634.60V665.5H632.80ZM634.60 659.7H636.40V664.8H634.60ZM636.40 654.4H638.20V670.9H636.40ZM638.20 653.9H640.00V671.6H638.20ZM640.00 659.5H641.80V665.0H640.00ZM641.80 655.9H643.60V669.2H641.80ZM643.60 658.8H645.40V665.7H643.60ZM645.40 659.5H647.20V665.0H645.40ZM647.20 661.3H649.00V662.7H647.20ZM649.00 661.3H650.80V662.7H649.00ZM650.80 661.3H652.60V662.7H650.80ZM652.60 661.3H654.40V662.7H652.60ZM654.40 661.3H656.20V662.7H654.40ZM656.20 661.3H658.00V662.7H656.20ZM658.00 661.3H659.80V662.7H658.00ZM659.80 659.9H661.60V664.5H659.80ZM661.60 652.6H663.40V673.1H661.60ZM663.40 659.8H665.20V664.6H663.40ZM665.20 658.8H667.00V665.8H665.20ZM667.00 652.7H668.80V672.9H667.00ZM668.80 658.6H670.60V666.0H668.80ZM670.60 660.5H672.40V663.7H670.60ZM672.40 659.1H674.20V665.5H672.40ZM674.20 656.2H676.00V668.8H674.20ZM676.00 659.5H677.80V664.9H676.00ZM677.80 660.0H679.60V664.4H677.80ZM679.60 651.8H681.40V674.0H679.60ZM681.40 657.8H683.20V666.9H681.40ZM683.20 660.1H685.00V664.2H683.20ZM685.00 659.7H686.80V664.7H685.00ZM686.80 654.4H688.60V670.9H686.80ZM688.60 659.6H690.40V664.8H688.60ZM690.40 660.5H692.20V663.7H690.40ZM692.20 659.6H694.00V664.8H692.20ZM694.00 656.8H695.80V668.2H694.00ZM695.80 659.8H697.60V664.6H695.80ZM697.60 658.6H699.40V666.0H697.60ZM699.40 654.2H701.20V671.2H699.40ZM701.20 658.8H703.00V665.7H701.20ZM703.00 659.0H704.80V665.5H703.00ZM704.80 655.7H706.60V669.4H704.80ZM706.60 658.2H708.40V666.5H706.60ZM708.40 659.9H710.20V664.4H708.40ZM710.20 659.2H712.00V665.2H710.20ZM712.00 655.9H713.80V669.2H712.00ZM713.80 660.0H715.60V664.4H713.80ZM715.60 651.8H717.40V674.0H715.60ZM717.40 655.0H719.20V670.3H717.40ZM719.20 659.6H721.00V664.8H719.20ZM721.00 661.3H722.80V662.7H721.00ZM722.80 661.3H724.60V662.7H722.80ZM724.60 661.3H726.40V662.7H724.60ZM726.40 661.3H728.20V662.7H726.40ZM728.20 661.3H730.00V662.7H728.20ZM730.00 661.3H731.80V662.7H730.00ZM731.80 661.3H733.60V662.7H731.80ZM733.60 659.8H735.40V664.6H733.60ZM735.40 656.3H737.20V668.7H735.40ZM737.20 659.8H739.00V664.6H737.20ZM739.00 659.0H740.80V665.6H739.00ZM740.80 654.8H742.60V670.4H740.80ZM742.60 658.5H744.40V666.1H742.60ZM744.40 660.2H746.20V664.1H744.40ZM746.20 658.8H748.00V665.8H746.20ZM748.00 651.6H749.80V674.2H748.00ZM749.80 659.4H751.60V665.1H749.80ZM751.60 660.3H753.40V663.9H751.60ZM753.40 651.6H755.20V674.2H753.40ZM755.20 658.0H757.00V666.7H755.20ZM757.00 659.3H758.80V665.2H757.00ZM758.80 659.5H760.60V665.0H758.80ZM760.60 654.8H762.40V670.4H760.60ZM762.40 659.6H764.20V664.8H762.40ZM764.20 660.5H766.00V663.8H764.20ZM766.00 660.0H767.80V664.3H766.00ZM767.80 656.5H769.60V668.5H767.80ZM769.60 658.7H771.40V665.8H769.60ZM771.40 659.5H773.20V665.0H771.40ZM773.20 652.3H775.00V673.4H773.20ZM775.00 659.2H776.80V665.3H775.00ZM776.80 660.6H778.60V663.6H776.80ZM778.60 655.3H780.40V669.9H778.60ZM780.40 658.2H782.20V666.4H780.40ZM782.20 660.2H784.00V664.1H782.20ZM784.00 660.2H785.80V664.1H784.00ZM785.80 655.0H787.60V670.2H785.80ZM787.60 658.8H789.40V665.7H787.60ZM789.40 659.0H791.20V665.5H789.40ZM791.20 654.3H793.00V671.1H791.20ZM793.00 659.9H794.80V664.5H793.00ZM794.80 660.6H796.60V663.6H794.80ZM796.60 661.3H798.40V662.7H796.60ZM798.40 661.3H800.20V662.7H798.40ZM800.20 661.3H802.00V662.7H800.20ZM802.00 661.3H803.80V662.7H802.00ZM803.80 661.3H805.60V662.7H803.80ZM805.60 661.3H807.40V662.7H805.60ZM807.40 659.4H809.20V665.1H807.40ZM809.20 652.9H811.00V672.7H809.20ZM811.00 659.7H812.80V664.7H811.00ZM812.80 658.9H814.60V665.7H812.80ZM814.60 652.5H816.40V673.2H814.60ZM816.40 658.1H818.20V666.6H816.40ZM818.20 660.1H820.00V664.2H818.20ZM820.00 659.6H821.80V664.9H820.00ZM821.80 653.7H823.60V671.8H821.80ZM823.60 658.7H825.40V665.9H823.60ZM825.40 661.0H827.20V663.1H825.40ZM827.20 659.4H829.00V665.1H827.20ZM829.00 655.4H830.80V669.8H829.00ZM830.80 659.3H832.60V665.2H830.80ZM832.60 659.1H834.40V665.4H832.60ZM834.40 651.6H836.20V674.2H834.40ZM836.20 659.7H838.00V664.7H836.20ZM838.00 660.7H839.80V663.6H838.00ZM839.80 659.2H841.60V665.3H839.80ZM841.60 652.2H843.40V673.5H841.60ZM843.40 658.8H845.20V665.7H843.40ZM845.20 659.6H847.00V664.8H845.20ZM847.00 651.6H848.80V674.2H847.00ZM848.80 657.9H850.60V666.8H848.80ZM850.60 660.6H852.40V663.7H850.60ZM852.40 660.1H854.20V664.2H852.40ZM854.20 656.4H856.00V668.6H854.20ZM856.00 660.2H857.80V664.1H856.00ZM857.80 660.1H859.60V664.3H857.80ZM859.60 652.1H861.40V673.6H859.60ZM861.40 659.0H863.20V665.6H861.40ZM863.20 659.4H865.00V665.1H863.20ZM865.00 655.1H865.30V670.1H865.00Z" fill="#b9b9b9"/></svg>
<div class="abs" style="left:414px;top:750px;width:845px;text-align:center;font-size:25px;font-weight:500;line-height:30px;color:#787878;white-space:nowrap">ここにApple</div>
<div class="abs" style="left:600px;top:240px;width:2.3px;height:540px;background:linear-gradient(90deg,#e9cf63,#fff3b8 50%,#e9cf63)"></div>
</div></div>
<svg class="abs" style="left:589px;top:228.2px" width="24.2" height="25" viewBox="0 0 24.2 25"><path d="M3 0H21.2Q24.2 0 24.2 3V11L12.1 24.4L0 11V3Q0 0 3 0Z" fill="#e2d083"/><path d="M12.2 6V24.4" stroke="#fdf0a0" stroke-width="2"/></svg>
<div class="abs" style="left:600px;top:250px;width:2.3px;height:14px;background:linear-gradient(90deg,#e9cf63,#fff3b8 50%,#e9cf63)"></div>
</div></div>
<div id="ed"><div class="in">
<div class="abs" style="left:-10px;top:793px;width:1270px;height:58px;background:#484848"></div>
<div class="abs" style="left:262px;top:793px;width:230.5px;height:58px;background:linear-gradient(#666,#5b5b5b)"></div>
<div class="abs" style="left:260.5px;top:793px;width:1.7px;height:58px;background:#232323"></div>
<div class="abs" style="left:492px;top:793px;width:1.7px;height:58px;background:#232323"></div>
<div class="abs" style="left:724.5px;top:793px;width:1.7px;height:58px;background:#232323"></div>
<div class="abs" style="left:956.5px;top:793px;width:1.7px;height:58px;background:#232323"></div>
<div class="tab" style="left:257px;width:230px">トラック</div>
<div class="tab" style="left:489.5px;width:230px">ファイル</div>
<div class="tab" style="left:721px;width:230px">スマートテンポ</div>
<div class="abs" style="left:-10px;top:850.3px;width:1270px;height:2px;background:#1f1f1f"></div>
<div class="abs" style="left:-10px;top:852.3px;width:1270px;height:56px;background:#464646"></div>
<div class="dg" style="left:-12px;top:861px;width:355px;height:40px"><div class="d" style="left:110.5px"></div><div class="d" style="left:232.5px"></div></div>
<div class="jt" style="left:-2.5px;top:868.5px">編集</div>
<svg class="chev" style="left:69.5px;top:878px" width="15" height="9"><path d="M1 1L7.5 8L14 1" fill="none" stroke="#b9b9b9" stroke-width="2" stroke-linecap="round" stroke-linejoin="round"/></svg>
<div class="jt" style="left:119.5px;top:868.5px">機能</div>
<svg class="chev" style="left:191.5px;top:878px" width="15" height="9"><path d="M1 1L7.5 8L14 1" fill="none" stroke="#b9b9b9" stroke-width="2" stroke-linecap="round" stroke-linejoin="round"/></svg>
<div class="jt" style="left:242px;top:868.5px">表示</div>
<svg class="chev" style="left:315.5px;top:878px" width="15" height="9"><path d="M1 1L7.5 8L14 1" fill="none" stroke="#b9b9b9" stroke-width="2" stroke-linecap="round" stroke-linejoin="round"/></svg>
<div class="dg" style="left:360.5px;top:861px;width:129px;height:40px"><div class="d" style="left:64px"></div></div>
<svg class="abs" style="left:369px;top:867px" width="46" height="28" viewBox="0 0 46 28"><g stroke="#fff" stroke-width="2" fill="none" stroke-linecap="butt"><path d="M1 22H10M17 19.5L28.5 7.5M34 5H45"/></g><circle cx="14.5" cy="22" r="3.8" fill="#fff"/><circle cx="30.5" cy="5.5" r="3.8" fill="#fff"/></svg>
<svg class="abs" style="left:435px;top:867.5px" width="45" height="27" viewBox="0 0 45 27"><g stroke="#fff" stroke-width="1.9" fill="none" stroke-linejoin="round"><path d="M1.5 1.5C12 2 16 9 22.5 13.5C29 18 33 25 43.5 25.5V1.5C33 2 29 9 22.5 13.5C16 18 12 25 1.5 25.5Z"/></g><g stroke="#fff" stroke-width="1.2"><path d="M5.0 12.0V15.0M29.6 12.0V15.0"/><path d="M7.6 10.5V16.5M32.2 10.5V16.5"/><path d="M10.2 8.5V18.5M34.8 8.5V18.5"/><path d="M12.8 10.5V16.5M37.4 10.5V16.5"/><path d="M15.4 12.0V15.0M40.0 12.0V15.0"/></g></svg>
<div class="dg" style="left:507px;top:861px;width:64.5px;height:40px;background:#366ba5"></div>
<svg class="abs" style="left:517.2px;top:867.5px" width="44" height="28" viewBox="0 0 44 28"><path d="M14.5 1H29.5L23.4 10.5V27H20.6V10.5Z" fill="#fff"/><g fill="none" stroke="#fff" stroke-width="2.3" stroke-linecap="round" stroke-linejoin="round"><path d="M3 10.5L10.5 16L3 21.5"/><path d="M41 10.5L33.5 16L41 21.5"/></g></svg>
<div class="dg" style="left:590.5px;top:861px;width:173px;height:40px"><div class="d" style="left:86.5px"></div></div>
<svg class="abs" style="left:611px;top:867.5px" width="20" height="28" viewBox="0 0 20 28"><path d="M1.5 1V22L7 17L11.4 27L15.2 25.2L10.8 15.6H18Z" fill="#fff"/></svg>
<svg class="chev" style="left:647.5px;top:878px" width="15" height="9"><path d="M1 1L7.5 8L14 1" fill="none" stroke="#b9b9b9" stroke-width="2" stroke-linecap="round" stroke-linejoin="round"/></svg>
<svg class="abs" style="left:693.5px;top:868px" width="27" height="27" viewBox="0 0 27 27"><path d="M13.5 0V11.3M13.5 15.7V27M0 13.5H11.3M15.7 13.5H27" stroke="#fff" stroke-width="1.8" fill="none"/><rect x="13" y="13" width="1" height="1" fill="#fff"/></svg>
<svg class="chev" style="left:735.3px;top:878px" width="15" height="9"><path d="M1 1L7.5 8L14 1" fill="none" stroke="#b9b9b9" stroke-width="2" stroke-linecap="round" stroke-linejoin="round"/></svg>
<div class="dg" style="left:927px;top:861px;width:65px;height:40px"></div>
<svg class="abs" style="left:939px;top:868px" width="45" height="26" viewBox="0 0 45 26"><g stroke="#fff" stroke-width="1.5" stroke-linecap="round"><path d="M1.5 12.25V13.75"/><path d="M5.0 11.25V14.75"/><path d="M8.5 9.5V16.5"/><path d="M12.0 7.0V19.0"/><path d="M15.5 8.5V17.5"/><path d="M19.0 4.5V21.5"/><path d="M22.5 0.5V25.5"/><path d="M26.0 4.5V21.5"/><path d="M29.5 8.5V17.5"/><path d="M33.0 7.0V19.0"/><path d="M36.5 9.5V16.5"/><path d="M40.0 11.25V14.75"/><path d="M43.5 12.25V13.75"/></g></svg>
<div class="dg" style="left:1008.5px;top:861px;width:65px;height:40px"></div>
<svg class="abs" style="left:1027px;top:868px" width="28" height="26" viewBox="0 0 28 26"><g stroke="#fff" stroke-width="2" fill="none" stroke-linecap="round" stroke-linejoin="round"><path d="M1.5 1V25M26.5 1V25"/><path stroke-width="1.7" d="M5 13H23M9.5 8.5L5 13L9.5 17.5M18.5 8.5L23 13L18.5 17.5"/></g></svg>
<div class="dg" style="left:1090.5px;top:861px;width:151px;height:40px"></div>
<svg class="abs" style="left:1097.5px;top:873.5px" width="27" height="16" viewBox="0 0 27 16"><g fill="none" stroke="#cfcfcf" stroke-width="1.8" stroke-linecap="round" stroke-linejoin="round"><path d="M2 8H25M7.5 2.5L2 8L7.5 13.5M19.5 2.5L25 8L19.5 13.5"/></g></svg>
<div class="abs" style="left:1138px;top:879px;width:90px;height:6px;border-radius:3px;background:#242424"></div><div class="abs" style="left:1139px;top:865px;width:2px;height:4px;background:#878787"></div><div class="abs" style="left:1144.8px;top:865px;width:2px;height:4px;background:#878787"></div><div class="abs" style="left:1152px;top:865px;width:2px;height:4px;background:#878787"></div><div class="abs" style="left:1168.8px;top:865px;width:2px;height:4px;background:#878787"></div><div class="abs" style="left:1194.5px;top:865px;width:2px;height:4px;background:#878787"></div><div class="abs" style="left:1222.5px;top:865px;width:2px;height:4px;background:#878787"></div><svg class="abs" style="left:1175px;top:869px" width="20" height="22" viewBox="0 0 20 22"><path d="M10 0.5L18.7 10V19Q18.7 21.3 16.3 21.3H3.7Q1.3 21.3 1.3 19V10Z" fill="#a2a2a2"/></svg>
<div class="abs" style="left:-10px;top:908.3px;width:1270px;height:2px;background:#1a1a1a"></div>
<div class="abs" style="left:-10px;top:910.1px;width:84px;height:120px;background:#565656"></div>
<div class="abs" style="left:74px;top:910.1px;width:2.4px;height:120px;background:#0f0f0f"></div>
<div class="abs" style="left:76.4px;top:910.1px;width:11px;height:120px;background:#333"></div>
<div class="abs" style="left:76.4px;top:910.1px;width:11px;height:44.5px;background:repeating-linear-gradient(-45deg,#3d3d3d 0 7.15px,#343434 7.15px 14.3px)"></div>
<div class="abs" style="left:86.7px;top:910.1px;width:1.6px;height:120px;background:#0f0f0f"></div>
<div class="abs" style="left:-10px;top:997.9px;width:100px;height:1.8px;background:#121212"></div>
<div class="abs" style="left:-12px;top:930.5px;width:70px;height:41px;border-radius:7px;background:linear-gradient(#464646,#434343);box-shadow:0 0 0 .8px #434343,0 1px 1px .5px rgba(0,0,0,.22)"></div>
<svg class="abs" style="left:12px;top:938px" width="27" height="27" viewBox="0 0 27 27"><rect x="1.2" y="1.2" width="24.6" height="24.6" fill="none" stroke="#fff" stroke-width="2"/><rect x="1" y="1" width="25" height="5.5" fill="#fff"/><path d="M8 13L13.5 18L19 13" fill="none" stroke="#fff" stroke-width="1.8" stroke-linecap="round" stroke-linejoin="round"/></svg>
<div class="abs" style="left:12px;top:1014px;font-size:25.5px;line-height:28px;color:#8c8c8c">100</div>
<div class="abs" style="left:88.2px;top:910.1px;width:1172px;height:44.3px;background:#c19c3a"></div>
<div class="abs" style="left:88.2px;top:954.3px;width:1172px;height:1.9px;background:#111"></div>
<div class="abs" style="left:94.7px;top:910.6px;font-size:25px;line-height:28px;color:#131313;-webkit-text-stroke:.25px #131313;transform:scaleX(1.1);transform-origin:0 0">9</div>
<div class="abs" style="left:637.5px;top:916.5px;width:2.2px;height:38px;background:#111"></div>
<div class="abs" style="left:644.9px;top:910.6px;font-size:25px;line-height:28px;color:#131313;-webkit-text-stroke:.25px #131313;transform:scaleX(0.98);transform-origin:0 0">10</div>
<div class="abs" style="left:1187.8px;top:916.5px;width:2.2px;height:38px;background:#111"></div>
<div class="abs" style="left:1195.2px;top:910.6px;font-size:25px;line-height:28px;color:#131313;-webkit-text-stroke:.25px #131313;transform:scaleX(0.98);transform-origin:0 0">11</div>
<div class="abs" style="left:88.2px;top:956.1px;width:1172px;height:41.9px;background:#cfcfcf;border-radius:6px 0 0 0"></div>
<div class="abs" style="left:88.2px;top:997.9px;width:1172px;height:1.8px;background:#111"></div>
<div class="abs" style="left:88.2px;top:999.7px;width:1172px;height:30px;background:#3d3d3d"></div>
<svg class="abs" style="left:88px;top:955px" width="1172" height="70" viewBox="88 955 1172 70"><path d="M121.8 981.7V998M156.2 981.7V998M190.6 981.7V998M259.4 981.7V998M293.8 981.7V998M328.2 981.7V998M396.9 981.7V998M431.3 981.7V998M465.7 981.7V998M534.5 981.7V998M568.9 981.7V998M603.3 981.7V998M672.1 981.7V998M706.5 981.7V998M740.9 981.7V998M809.7 981.7V998M844.1 981.7V998M878.5 981.7V998M947.2 981.7V998M981.6 981.7V998M1016.0 981.7V998M1084.8 981.7V998M1119.2 981.7V998M1153.6 981.7V998M1222.4 981.7V998M1256.8 981.7V998" stroke="#a3a3a3" stroke-width="1.8" fill="none"/><path d="M225.0 970.3V998M362.5 970.3V998M500.1 970.3V998M775.3 970.3V998M912.9 970.3V998M1050.4 970.3V998" stroke="#a1a1a1" stroke-width="1.8" fill="none"/><path d="M638.5 956.1V998M1188.8 956.1V998" stroke="#9a9a9a" stroke-width="1.8" fill="none"/><path d="M225.0 999.5V1024M362.5 999.5V1024M500.1 999.5V1024M638.5 999.5V1024M775.3 999.5V1024M912.9 999.5V1024M1050.4 999.5V1024M1188.8 999.5V1024" stroke="#4a4a4a" stroke-width="1.8" fill="none"/></svg>
<div class="abs" style="left:99.3px;top:961.5px;font-size:21.5px;line-height:26px;color:#17375c;white-space:nowrap;transform:scaleX(1.075);transform-origin:0 0;-webkit-text-stroke:.4px #17375c">Dub Deep Synth</div>
<svg class="abs" style="left:280px;top:966.3px" width="35" height="19" viewBox="0 0 35 19"><g fill="none" stroke="#17375c" stroke-width="1.7"><ellipse cx="9.3" cy="8.2" rx="6.6" ry="7.3"/><ellipse cx="24.8" cy="8.2" rx="6.6" ry="7.3"/><path d="M0 17.4H34.5" stroke-width="1.4"/></g></svg>
<div class="abs" style="left:505.3px;top:975px;width:2.6px;height:60px;background:linear-gradient(90deg,#e9cf63,#fff3b8 50%,#e9cf63)"></div>
<svg class="abs" style="left:494.3px;top:956.1px" width="24.6" height="25" viewBox="0 0 24.6 25"><path d="M3.2 .4H21.4Q24.2 .4 24.2 3.2V11.6L12.3 24.2L.4 11.6V3.2Q.4 .4 3.2 .4Z" fill="#f6e494" stroke="#9b8a45" stroke-width=".8"/><path d="M12.3 6V24.2" stroke="#fff6b8" stroke-width="2"/></svg>
</div></div>
<div id="lb"><div class="in">
<div class="abs" style="left:1266px;top:133px;width:700px;height:59.5px;background:#404040"></div>
<div class="abs" style="left:1266px;top:192px;width:700px;height:1.6px;background:#1f1f1f"></div>
<div class="dg" style="left:1277px;top:143px;width:128px;height:40px"><div class="bl" style="left:0;width:63.5px"></div><div class="d" style="left:63.5px"></div></div>
<svg class="abs" style="left:1294.5px;top:157.5px" width="28" height="12" viewBox="0 0 28 12"><g fill="none" stroke="#fff" stroke-width="1.7"><rect x="1" y="1" width="26" height="10" rx="2.5"/><path d="M9.7 1V11M18.3 1V11"/></g></svg>
<svg class="abs" style="left:1359px;top:154.5px" width="28" height="19" viewBox="0 0 28 19"><g fill="none" stroke="#fff" stroke-width="1.8"><rect x="1" y="1" width="26" height="17" rx="1"/><path d="M9.7 1V18M18.3 1V18"/></g></svg>
<div class="lt" style="left:1513.5px;top:149px;color:#a2a2a2;font-size:24.4px">ループパック:</div>
<div class="lt" style="left:1694px;top:149px;color:#ebebeb;font-size:24.6px">すべてのパック</div>
<svg class="abs" style="left:1888px;top:151px" width="18" height="24" viewBox="0 0 18 24"><g fill="none" stroke="#b0b0b0" stroke-width="1.9" stroke-linecap="round" stroke-linejoin="round"><path d="M1.5 8.6L9.0 1.5L16.5 8.6M1.5 15.4L9.0 22.5L16.5 15.4"/></g></svg>
<div class="abs" style="left:1266px;top:193.6px;width:700px;height:79px;background:#3a3a3a"></div>
<div class="abs" style="left:1828.3px;top:193.6px;width:140px;height:79px;background:#366ba5"></div>
<div class="abs" style="left:1346.3px;top:193.6px;width:1.5px;height:79px;background:#2a2a2a"></div>
<div class="abs" style="left:1586.8px;top:193.6px;width:1.5px;height:79px;background:#2a2a2a"></div>
<div class="abs" style="left:1827px;top:193.6px;width:1.5px;height:79px;background:#2a2a2a"></div>
<svg class="abs" style="left:1292.5px;top:218px" width="27" height="27"><path d="M1 1L26 26M26 1L1 26" stroke="#7b7b7b" stroke-width="1.9" fill="none" stroke-linecap="round"/></svg>
<div class="lt" style="left:1347px;width:239px;top:216.6px;text-align:center;color:#f0f0f0;font-size:24px">インストゥルメント</div>
<div class="lt" style="left:1588px;width:239px;top:216.6px;text-align:center;color:#f0f0f0;font-size:24px">ジャンル</div>
<div class="lt" style="left:1899px;top:216.6px;color:#fff;font-size:24px">詳細表示</div>
<div class="abs" style="left:1266px;top:272.5px;width:700px;height:2.5px;background:#222"></div>
<div class="abs" style="left:1266px;top:275px;width:700px;height:264px;background:#515151"></div>
<div class="tag" style="left:1283.1px;top:290.8px;width:416px"><b style="left:0;width:209.2px">シングル</b><i style="left:208.7px"></i><b style="left:209.2px;width:207px">アンサンブル</b></div>
<div class="tag" style="left:1706.8px;top:290.8px;width:300px"><b style="left:0;width:205.2px">ドライ</b><i style="left:205.5px"></i></div>
<div class="tag" style="left:1283.1px;top:338.8px;width:416px"><b style="left:0;width:209.2px">クリーン</b><i style="left:208.7px"></i><b style="left:209.2px;width:207px">歪んだ</b></div>
<div class="tag" style="left:1706.8px;top:338.8px;width:300px"><b style="left:0;width:205.2px">グルーブ</b><i style="left:205.5px"></i></div>
<div class="tag" style="left:1283.1px;top:386.8px;width:416px"><b style="left:0;width:209.2px">アコースティック</b><i style="left:208.7px"></i><b style="left:209.2px;width:207px">エレクトリック</b></div>
<div class="tag" style="left:1706.8px;top:386.8px;width:300px"><b style="left:0;width:205.2px">メロディック</b><i style="left:205.5px"></i></div>
<div class="tag" style="left:1283.1px;top:434.8px;width:416px"><b style="left:0;width:209.2px">リラックス</b><i style="left:208.7px"></i><b style="left:209.2px;width:207px">激しい</b></div>
<div class="tag" style="left:1706.8px;top:434.8px;width:300px"><b style="left:0;width:205.2px">パート</b><i style="left:205.5px"></i></div>
<div class="tag" style="left:1283.1px;top:482.8px;width:416px"><b style="left:0;width:209.2px">明るい</b><i style="left:208.7px"></i><b style="left:209.2px;width:207px">暗い</b></div>
<div class="abs" style="left:1266px;top:539px;width:700px;height:1.5px;background:#2e2e2e"></div>
<div class="abs" style="left:1266px;top:540.5px;width:700px;height:69.5px;background:#5f5f5f"></div>
<div class="abs" style="left:1688px;top:548px;width:30px;height:1.3px;background:#a5a5a5"></div>
<div class="lt" style="left:1276px;top:564.5px;color:#cdcdcd">スケール:</div>
<div class="sel2" style="left:1403.3px;width:227.6px"></div>
<div class="lt" style="left:1424.5px;top:564.5px;color:#fff">マイナー</div>
<svg class="abs" style="left:1602px;top:567.5px" width="18" height="24" viewBox="0 0 18 24"><g fill="none" stroke="#b6b6b6" stroke-width="1.9" stroke-linecap="round" stroke-linejoin="round"><path d="M1.5 8.6L9.0 1.5L16.5 8.6M1.5 15.4L9.0 22.5L16.5 15.4"/></g></svg>
<div class="lt" style="left:1646px;top:564.5px;color:#cdcdcd">拍子:</div>
<div class="sel2" style="left:1719.3px;width:174px"></div>
<div class="lt" style="left:1741px;top:564.5px;color:#fff">すべて</div>
<svg class="abs" style="left:1864.5px;top:567.5px" width="18" height="24" viewBox="0 0 18 24"><g fill="none" stroke="#b6b6b6" stroke-width="1.9" stroke-linecap="round" stroke-linejoin="round"><path d="M1.5 8.6L9.0 1.5L16.5 8.6M1.5 15.4L9.0 22.5L16.5 15.4"/></g></svg>
<div class="sel2" style="left:1905.3px;width:80px"></div>
<svg class="abs" style="left:1909.5px;top:565.5px" width="40" height="28" viewBox="0 0 40 28"><g fill="none" stroke="#777" stroke-width="2" stroke-linecap="round"><circle cx="10" cy="10" r="8"/><path d="M16 16.5L24 25"/><path d="M28 10L32.5 14.5L37 10" stroke-width="1.6"/></g></svg>
<div class="abs" style="left:1266px;top:610px;width:700px;height:1.3px;background:#2d2d2d"></div>
<div class="abs" style="left:1266px;top:611.3px;width:700px;height:43.5px;background:#4c4c4c"></div>
<svg class="abs" style="left:1281.5px;top:619.5px" width="26.8" height="26.8" viewBox="0 0 26.8 26.8"><defs><clipPath id="qc"><rect x="0" y="0" width="26.8" height="26.8" rx="6.5"/></clipPath></defs><g clip-path="url(#qc)"><rect x="0" y="0" width="26.8" height="26.8" fill="#3a3a3a"/><rect x="0" y="0" width="12.7" height="12.7" fill="#4588c5"/><rect x="14.1" y="0" width="12.7" height="12.7" fill="#45a559"/><rect x="0" y="14.1" width="12.7" height="12.7" fill="#bfa73c"/><rect x="14.1" y="14.1" width="12.7" height="12.7" fill="#bfa73c"/></g></svg>
<div class="abs" style="left:1340px;top:620px;font-size:20px;font-weight:500;line-height:24px;color:#fff;white-space:nowrap">名前</div>
<div class="abs" style="left:1827px;top:620px;font-size:20px;font-weight:500;line-height:24px;color:#fff;white-space:nowrap">拍</div>
<svg class="abs" style="left:1930px;top:622.5px" width="24" height="21" viewBox="0 0 24 21"><path d="M12 20.5C7 16.5 .6 12 .6 6.3C.6 2.8 3.2 .5 6.3 .5C8.6 .5 10.8 1.8 12 4C13.2 1.8 15.4 .5 17.7 .5C20.8 .5 23.4 2.8 23.4 6.3C23.4 12 17 16.5 12 20.5Z" fill="#fff"/></svg>
<div class="abs" style="left:1266px;top:654.5px;width:700px;height:1.6px;background:#2b2b2b"></div>
<div class="abs" style="left:1266px;top:656px;width:700px;height:380px;overflow:hidden;background:#383838"><div class="abs" style="left:-1266px;top:-656px">
<div class="row" style="top:638px;background:#3b3b3b"><div class="ic" style="background:#394a5f;box-shadow:0 1px 1.5px rgba(0,0,0,.45)"><svg width="34.2" height="34.2" viewBox="0 0 34.2 34.2"><g fill="#8f8f8f"><rect x="4.10" y="15.15" width="2.2" height="3.9"/><rect x="8.10" y="11.10" width="2.2" height="12"/><rect x="12.10" y="13.20" width="2.2" height="7.8"/><rect x="16.10" y="8.05" width="2.2" height="18.1"/><rect x="20.10" y="13.20" width="2.2" height="7.8"/><rect x="24.10" y="11.10" width="2.2" height="12"/><rect x="28.10" y="15.15" width="2.2" height="3.9"/></g></svg></div><div class="n" style="color:#787878;-webkit-text-stroke:0.45px #787878;transform:scaleX(1.0145)">Golden Age String Hook</div><div class="bt" style="color:#787878;-webkit-text-stroke:0.45px #787878">4</div>
<svg class="abs" style="left:511px;top:10.5px" width="28" height="28" viewBox="0 0 28 28"><path d="M5.2 6.2A12.3 12.3 0 1 1 2 11" fill="none" stroke="#8d8d8d" stroke-width="1.7" stroke-linecap="round"/></svg>
<div class="cb" style=""></div></div>
<div class="row" style="top:686px;background:#363636"><div class="ic" style="background:#3b6a9f;box-shadow:0 1px 1.5px rgba(0,0,0,.45)"><svg width="34.2" height="34.2" viewBox="0 0 34.2 34.2"><g fill="#fff"><rect x="4.10" y="15.15" width="2.2" height="3.9"/><rect x="8.10" y="11.10" width="2.2" height="12"/><rect x="12.10" y="13.20" width="2.2" height="7.8"/><rect x="16.10" y="8.05" width="2.2" height="18.1"/><rect x="20.10" y="13.20" width="2.2" height="7.8"/><rect x="24.10" y="11.10" width="2.2" height="12"/><rect x="28.10" y="15.15" width="2.2" height="3.9"/></g></svg></div><div class="n" style="color:#fff;-webkit-text-stroke:0.5px #fff;transform:scaleX(0.996)">Golden Age Piano</div><div class="bt" style="color:#fff;-webkit-text-stroke:0.5px #fff">8</div>
<div class="cb" style=""></div></div>
<div class="row" style="top:734px;background:#3b3b3b"><div class="ic" style="background:#394a5f;box-shadow:0 1px 1.5px rgba(0,0,0,.45)"><svg width="34.2" height="34.2" viewBox="0 0 34.2 34.2"><g fill="#8f8f8f"><rect x="4.10" y="15.15" width="2.2" height="3.9"/><rect x="8.10" y="11.10" width="2.2" height="12"/><rect x="12.10" y="13.20" width="2.2" height="7.8"/><rect x="16.10" y="8.05" width="2.2" height="18.1"/><rect x="20.10" y="13.20" width="2.2" height="7.8"/><rect x="24.10" y="11.10" width="2.2" height="12"/><rect x="28.10" y="15.15" width="2.2" height="3.9"/></g></svg></div><div class="n" style="color:#787878;-webkit-text-stroke:0.45px #787878;transform:scaleX(0.989)">Cali Vibes Bass</div><div class="bt" style="color:#787878;-webkit-text-stroke:0.45px #787878">8</div>
<svg class="abs" style="left:511px;top:10.5px" width="28" height="28" viewBox="0 0 28 28"><path d="M5.2 6.2A12.3 12.3 0 1 1 2 11" fill="none" stroke="#8d8d8d" stroke-width="1.7" stroke-linecap="round"/></svg>
<div class="cb" style=""></div></div>
<div class="row" style="top:782px;background:#363636"><div class="ic" style="background:#394a5f;box-shadow:0 1px 1.5px rgba(0,0,0,.45)"><svg width="34.2" height="34.2" viewBox="0 0 34.2 34.2"><g fill="#8f8f8f"><rect x="4.10" y="15.15" width="2.2" height="3.9"/><rect x="8.10" y="11.10" width="2.2" height="12"/><rect x="12.10" y="13.20" width="2.2" height="7.8"/><rect x="16.10" y="8.05" width="2.2" height="18.1"/><rect x="20.10" y="13.20" width="2.2" height="7.8"/><rect x="24.10" y="11.10" width="2.2" height="12"/><rect x="28.10" y="15.15" width="2.2" height="3.9"/></g></svg></div><div class="n" style="color:#787878;-webkit-text-stroke:0.45px #787878;transform:scaleX(1.021)">Climbing Brass Arpeggio</div><div class="bt" style="color:#787878;-webkit-text-stroke:0.45px #787878">8</div>
<svg class="abs" style="left:511px;top:10.5px" width="28" height="28" viewBox="0 0 28 28"><path d="M5.2 6.2A12.3 12.3 0 1 1 2 11" fill="none" stroke="#8d8d8d" stroke-width="1.7" stroke-linecap="round"/></svg>
<div class="cb" style=""></div></div>
<div class="row" style="top:830px;background:#575757"><div class="ic" style="background:#3b6a9f;box-shadow:0 1px 1.5px rgba(0,0,0,.45)"><svg width="34.2" height="34.2" viewBox="0 0 34.2 34.2"><g fill="#fff"><rect x="4.10" y="15.15" width="2.2" height="3.9"/><rect x="8.10" y="11.10" width="2.2" height="12"/><rect x="12.10" y="13.20" width="2.2" height="7.8"/><rect x="16.10" y="8.05" width="2.2" height="18.1"/><rect x="20.10" y="13.20" width="2.2" height="7.8"/><rect x="24.10" y="11.10" width="2.2" height="12"/><rect x="28.10" y="15.15" width="2.2" height="3.9"/></g></svg></div><div class="n" style="color:#fff;-webkit-text-stroke:0.5px #fff;transform:scaleX(0.996)">Golden Age Piano</div><div class="bt" style="color:#fff;-webkit-text-stroke:0.5px #fff">8</div>
<div class="cb" style="background:#4a4a4a;box-shadow:0 0 0 1px #3e3e3e"></div></div>
<div class="row" style="top:878px;background:#363636"><div class="ic" style="background:#394a5f;box-shadow:0 1px 1.5px rgba(0,0,0,.45)"><svg width="34.2" height="34.2" viewBox="0 0 34.2 34.2"><g fill="#8f8f8f"><rect x="4.10" y="15.15" width="2.2" height="3.9"/><rect x="8.10" y="11.10" width="2.2" height="12"/><rect x="12.10" y="13.20" width="2.2" height="7.8"/><rect x="16.10" y="8.05" width="2.2" height="18.1"/><rect x="20.10" y="13.20" width="2.2" height="7.8"/><rect x="24.10" y="11.10" width="2.2" height="12"/><rect x="28.10" y="15.15" width="2.2" height="3.9"/></g></svg></div><div class="n" style="color:#787878;-webkit-text-stroke:0.45px #787878;transform:scaleX(1.019)">Golden Age Vibrato Strings</div><div class="bt" style="color:#787878;-webkit-text-stroke:0.45px #787878">8</div>
<svg class="abs" style="left:511px;top:10.5px" width="28" height="28" viewBox="0 0 28 28"><path d="M5.2 6.2A12.3 12.3 0 1 1 2 11" fill="none" stroke="#8d8d8d" stroke-width="1.7" stroke-linecap="round"/></svg>
<div class="cb" style=""></div></div>
<div class="row" style="top:926px;background:#3b3b3b"><div class="ic" style="background:#394a5f;box-shadow:0 1px 1.5px rgba(0,0,0,.45)"><svg width="34.2" height="34.2" viewBox="0 0 34.2 34.2"><g fill="#8f8f8f"><rect x="4.10" y="15.15" width="2.2" height="3.9"/><rect x="8.10" y="11.10" width="2.2" height="12"/><rect x="12.10" y="13.20" width="2.2" height="7.8"/><rect x="16.10" y="8.05" width="2.2" height="18.1"/><rect x="20.10" y="13.20" width="2.2" height="7.8"/><rect x="24.10" y="11.10" width="2.2" height="12"/><rect x="28.10" y="15.15" width="2.2" height="3.9"/></g></svg></div><div class="n" style="color:#787878;-webkit-text-stroke:0.45px #787878;transform:scaleX(1.005)">Cali Vibes Glide Synth</div><div class="bt" style="color:#787878;-webkit-text-stroke:0.45px #787878">8</div>
<svg class="abs" style="left:511px;top:10.5px" width="28" height="28" viewBox="0 0 28 28"><path d="M5.2 6.2A12.3 12.3 0 1 1 2 11" fill="none" stroke="#8d8d8d" stroke-width="1.7" stroke-linecap="round"/></svg>
<div class="cb" style=""></div></div>
<div class="row" style="top:974px;background:#363636"><div class="ic" style="background:#394a5f;box-shadow:0 1px 1.5px rgba(0,0,0,.45)"><svg width="34.2" height="34.2" viewBox="0 0 34.2 34.2"><g fill="#8f8f8f"><rect x="4.10" y="15.15" width="2.2" height="3.9"/><rect x="8.10" y="11.10" width="2.2" height="12"/><rect x="12.10" y="13.20" width="2.2" height="7.8"/><rect x="16.10" y="8.05" width="2.2" height="18.1"/><rect x="20.10" y="13.20" width="2.2" height="7.8"/><rect x="24.10" y="11.10" width="2.2" height="12"/><rect x="28.10" y="15.15" width="2.2" height="3.9"/></g></svg></div><div class="n" style="color:#787878;-webkit-text-stroke:0.45px #787878;transform:scaleX(0.997)">Cali Vibes Lead Guitar</div><div class="bt" style="color:#787878;-webkit-text-stroke:0.45px #787878">8</div>
<svg class="abs" style="left:511px;top:10.5px" width="28" height="28" viewBox="0 0 28 28"><path d="M5.2 6.2A12.3 12.3 0 1 1 2 11" fill="none" stroke="#8d8d8d" stroke-width="1.7" stroke-linecap="round"/></svg>
<div class="cb" style=""></div></div>
<div class="abs" style="left:1326.5px;top:656px;width:1.5px;height:380px;background:#2c2c2c"></div>
<div class="abs" style="left:1812px;top:656px;width:1.5px;height:380px;background:#2c2c2c"></div>
<div class="abs" style="left:1912px;top:656px;width:1.5px;height:380px;background:#2c2c2c"></div>
</div></div>
<div class="abs" style="left:1326.5px;top:615px;width:1.5px;height:36px;background:#303030"></div>
<div class="abs" style="left:1812px;top:615px;width:1.5px;height:36px;background:#303030"></div>
<div class="abs" style="left:1912px;top:615px;width:1.5px;height:36px;background:#303030"></div>
</div></div>
</body></html>
